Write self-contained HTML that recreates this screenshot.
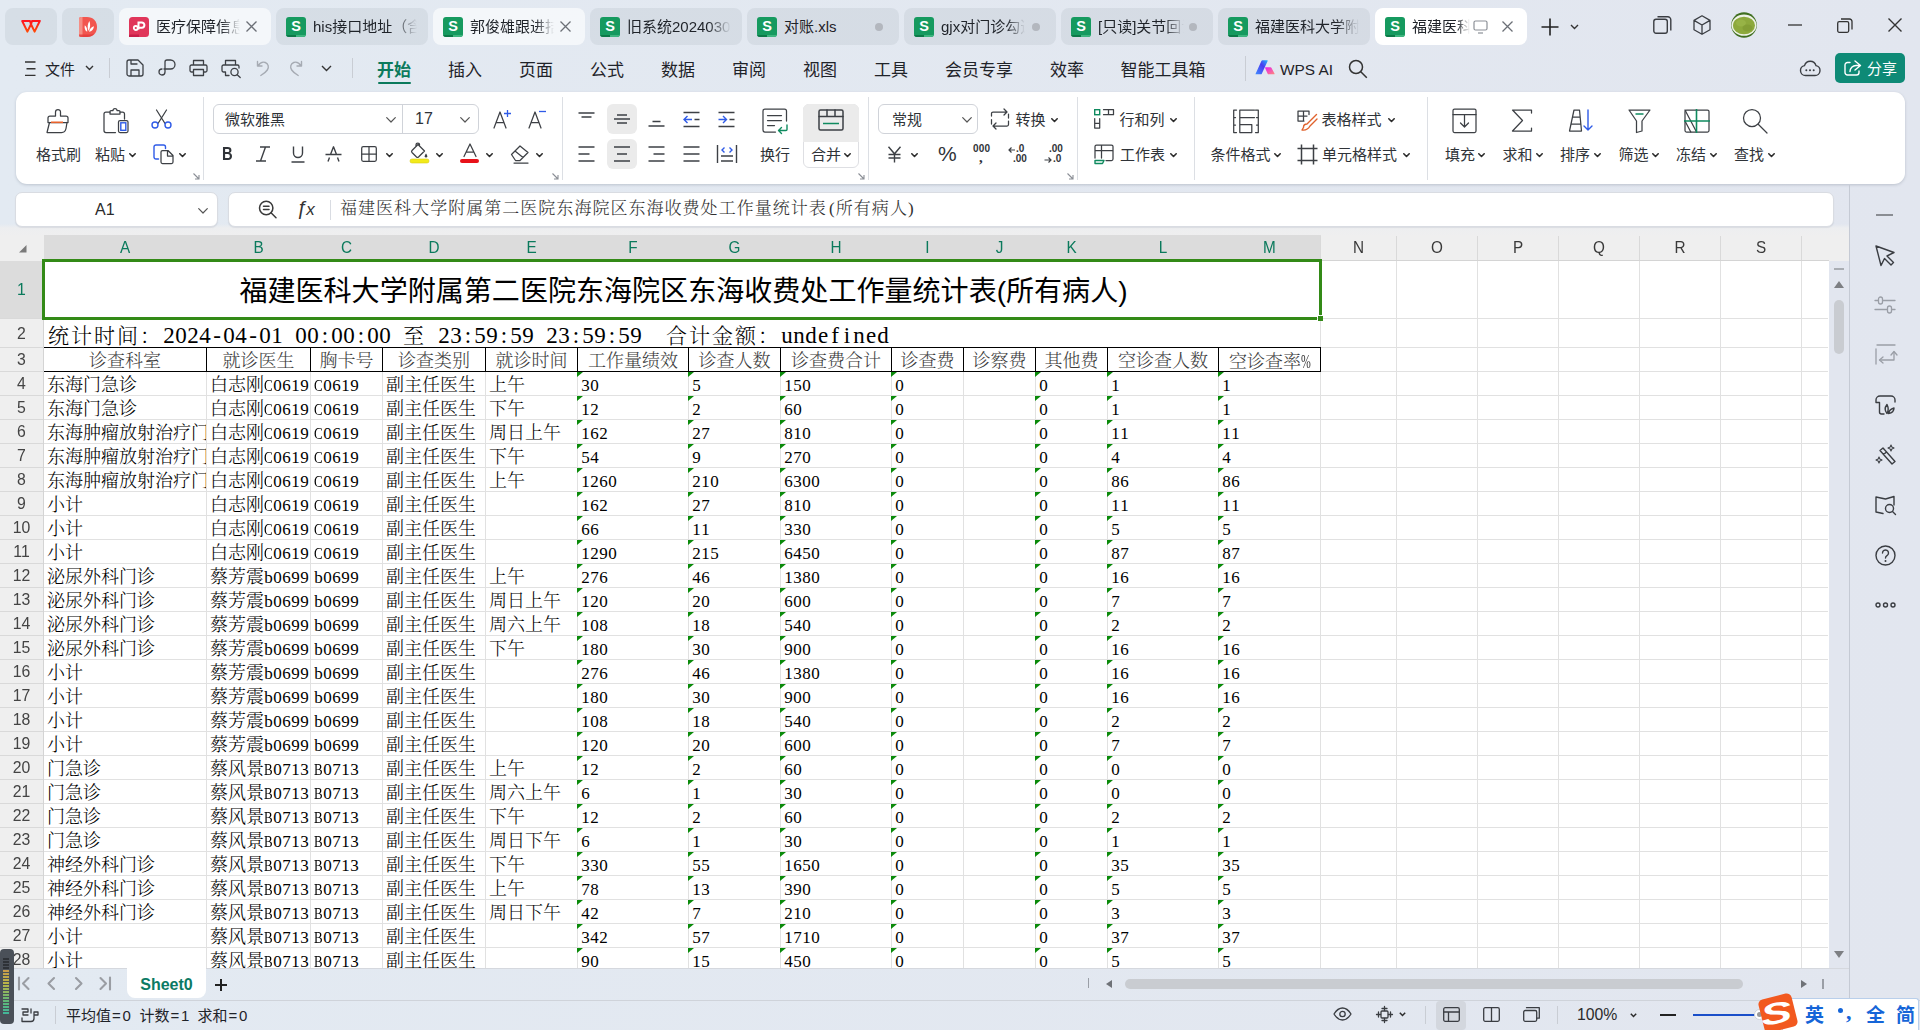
<!DOCTYPE html>
<html lang="zh-CN"><head><meta charset="utf-8"><title>WPS</title><style>
*{box-sizing:border-box;margin:0;padding:0}
html,body{width:1920px;height:1030px;overflow:hidden}
body{position:relative;background:linear-gradient(90deg,#e3eaf2,#e2e6ef);font-family:"Liberation Sans","Noto Sans CJK SC",sans-serif;color:#1f2329;font-size:15px}
.a{position:absolute}
svg{position:absolute;overflow:visible}
.ui{font-family:"Liberation Sans","Noto Sans CJK SC",sans-serif;margin-top:.09em}
/* title tabs */
.tab{position:absolute;top:8px;height:37px;width:152px;border-radius:8px;background:rgba(20,40,50,.058)}
.tab.h{background:rgba(255,255,255,.62)}
.tab.on{background:#fff}
.tab .t{position:absolute;left:37px;top:-1px;line-height:37px;font-size:15px;white-space:nowrap;overflow:hidden;color:#1f2329}
.sic{position:absolute;left:10px;top:9px;width:20px;height:20px;border-radius:3px;background:#169a5f;color:#fff;font:bold 14.500px/19px "Liberation Sans",sans-serif;text-align:center;overflow:hidden}
.sic:after{content:"";position:absolute;left:0;bottom:0;width:20px;height:2px;background:linear-gradient(90deg,#0c7a48 50%,#3fb57f 50%)}
.dot{position:absolute;left:128px;top:15px;width:8px;height:8px;border-radius:4px;background:#b3b7be}
/* menu */
.mi{position:absolute;top:52px;height:34px;line-height:34px;font-size:17px;color:#1f2329;white-space:nowrap;transform:translateX(-50%)}
/* ribbon */
#rb{position:absolute;left:16px;top:92px;width:1889px;height:92px;background:#fff;border-radius:11px;box-shadow:0 1px 3px rgba(90,100,120,.28)}
.sep{position:absolute;top:97px;width:1px;height:83px;background:#dcdfe4}
.rt{position:absolute;font-size:14px;line-height:20px;white-space:nowrap;color:#2f3338}
.cv{display:inline-block;width:5px;height:5px;border-right:1.6px solid #333;border-bottom:1.6px solid #333;transform:rotate(45deg);margin-left:5px;position:relative;top:-3px}
.bx{position:absolute;border:1px solid #d0d3d9;border-radius:6px;background:#fff}
/* sheet */
.ch{position:absolute;top:236px;height:24px;line-height:24px;text-align:center;font-size:17px;color:#3a3a3a;transform:scaleX(.9)}
.ch.s{color:#0b7a5c}
.rh{position:absolute;left:0;width:43px;text-align:center;font-size:17px;color:#444;transform:scaleX(.93)}
.vl{position:absolute;top:261px;width:1px;height:707px;background:#e1e1e1}
.hl{position:absolute;left:44px;height:1px;width:1784px;background:#e1e1e1}
.c{position:absolute;height:23px;line-height:23px;font-family:"Liberation Serif","Noto Serif CJK SC",serif;font-size:18px;font-weight:300;color:#000;white-space:nowrap;overflow:hidden}
.c i{font-style:normal;display:inline-block;width:9px;text-align:center;letter-spacing:0;font-size:17px}
.c i.w{text-align:left;transform:scaleX(.76);transform-origin:0 50%}
.c i.p{transform:scaleX(.62);font-size:19px}
.r2{font-size:21px;letter-spacing:2px}
.r2 i{width:12px;font-size:23px}
.hd{color:#3c3c3c;text-align:center}
.g{position:absolute;width:0;height:0;border-top:5.500px solid #0a8a0a;border-right:6px solid transparent}
</style></head><body>
<div class="tab" style="left:5px;width:52px"><svg style="left:15px;top:12px" width="22" height="14" viewBox="0 0 22 14"><defs><linearGradient id="wg" x1="0" y1="0" x2="0" y2="1"><stop offset="0" stop-color="#ff1520"/><stop offset="1" stop-color="#ff4a08"/></linearGradient></defs><path d="M10 1H2.200L7.400 11.600 11 4.200l3.600 7.400L19.800 1H12M10 1l1 3.200L12 1" fill="none" stroke="url(#wg)" stroke-width="2" stroke-linejoin="round" stroke-linecap="round"/></svg></div>
<div class="tab" style="left:62px;width:52px"><svg style="left:17px;top:9px" width="18" height="20" viewBox="0 0 18 20"><path d="M0 2a2 2 0 0 1 2-2h6c6 0 10 4 10 10s-4 10-10 10H2a2 2 0 0 1-2-2z" fill="#f2564f"/><path d="M0 2a2 2 0 0 1 2-2h1.5v20H2a2 2 0 0 1-2-2z" fill="#f58f86"/><path d="M9.600 14c-1.600-3.500-1-7 .8-10 1.200 3.200 1 7-.8 10zM8.200 14.800c-2.300-1.300-3-3.800-2.400-6.600 1.800 1.500 2.700 3.700 2.400 6.600zM10 14.800c.6-3 2.300-4.800 5-5.600-.3 3-2 5-5 5.600z" fill="#fff"/><path d="M0 17.500h10.500c2 0 3.500-.3 5-1.200-1.500 2.200-4 3.700-7.500 3.700H2a2 2 0 0 1-2-2z" fill="#e23b3b" opacity=".8"/></svg></div>
<div class="tab h" style="left:119px"><svg style="left:10px;top:9px" width="20" height="20" viewBox="0 0 20 20"><rect width="20" height="20" rx="3.5" fill="#e0365a"/><rect x="0" y="17.5" width="10" height="2.5" fill="#c81e48"/><path d="M9.5 12.5V5.5h3.3a2.6 2.6 0 0 1 0 5.2H9.2" fill="none" stroke="#fff" stroke-width="2"/><circle cx="6.8" cy="11" r="2" fill="none" stroke="#fff" stroke-width="1.8"/></svg><div class="t ui" style="width:84px;-webkit-mask-image:linear-gradient(to right,#000 78%,transparent);mask-image:linear-gradient(to right,#000 78%,transparent)">医疗保障信息</div><svg style="left:126px;top:12px" width="13" height="13" viewBox="0 0 13 13"><path d="M1.5 1.5l10 10M11.5 1.5l-10 10" stroke="#6b6f76" stroke-width="1.3" fill="none"/></svg></div>
<div class="tab " style="left:276px"><div class="sic">S</div><div class="t ui" style="width:104px;-webkit-mask-image:linear-gradient(to right,#000 78%,transparent);mask-image:linear-gradient(to right,#000 78%,transparent)">his接口地址（含</div></div>
<div class="tab h" style="left:433px"><div class="sic">S</div><div class="t ui" style="width:84px;-webkit-mask-image:linear-gradient(to right,#000 78%,transparent);mask-image:linear-gradient(to right,#000 78%,transparent)">郭俊雄跟进拮</div><svg style="left:126px;top:12px" width="13" height="13" viewBox="0 0 13 13"><path d="M1.5 1.5l10 10M11.5 1.5l-10 10" stroke="#6b6f76" stroke-width="1.3" fill="none"/></svg></div>
<div class="tab " style="left:590px"><div class="sic">S</div><div class="t ui" style="width:104px;-webkit-mask-image:linear-gradient(to right,#000 78%,transparent);mask-image:linear-gradient(to right,#000 78%,transparent)">旧系统20240308</div></div>
<div class="tab " style="left:747px"><div class="sic">S</div><div class="t ui" >对账.xls</div><div class="dot"></div></div>
<div class="tab " style="left:904px"><div class="sic">S</div><div class="t ui" style="width:84px;-webkit-mask-image:linear-gradient(to right,#000 78%,transparent);mask-image:linear-gradient(to right,#000 78%,transparent)">gjx对门诊勾选</div><div class="dot"></div></div>
<div class="tab " style="left:1061px"><div class="sic">S</div><div class="t ui" style="width:86px;-webkit-mask-image:linear-gradient(to right,#000 78%,transparent);mask-image:linear-gradient(to right,#000 78%,transparent)">[只读]关节回访</div><div class="dot"></div></div>
<div class="tab " style="left:1218px"><div class="sic">S</div><div class="t ui" style="width:104px;-webkit-mask-image:linear-gradient(to right,#000 78%,transparent);mask-image:linear-gradient(to right,#000 78%,transparent)">福建医科大学附属</div></div>
<div class="tab on" style="left:1375px"><div class="sic">S</div><div class="t ui" style="width:58px;-webkit-mask-image:linear-gradient(to right,#000 78%,transparent);mask-image:linear-gradient(to right,#000 78%,transparent)">福建医科大</div><svg style="left:98px;top:12px" width="15" height="14" viewBox="0 0 15 14"><rect x="1" y="1" width="13" height="9" rx="1.5" fill="none" stroke="#8c9097" stroke-width="1.2"/><path d="M5 13h5" stroke="#8c9097" stroke-width="1.2"/></svg><svg style="left:126px;top:12px" width="13" height="13" viewBox="0 0 13 13"><path d="M1.5 1.5l10 10M11.5 1.5l-10 10" stroke="#6b6f76" stroke-width="1.3" fill="none"/></svg></div>
<svg style="left:1541px;top:18px" width="18" height="18" viewBox="0 0 18 18"><path d="M9 0.5v17M0.5 9h17" stroke="#222" stroke-width="1.6" fill="none"/></svg>
<svg style="left:1570px;top:24px" width="9" height="6" viewBox="0 0 9 6"><path d="M1 1l3.5 3.5L8 1" stroke="#333" stroke-width="1.4" fill="none"/></svg>
<svg style="left:1653px;top:16px" width="19" height="18" viewBox="0 0 19 18"><rect x="0.8" y="3.2" width="13.5" height="14" rx="2.2" fill="none" stroke="#3a3d42" stroke-width="1.4"/><path d="M4.5 0.8h10.3a3 3 0 0 1 3 3v10.6" fill="none" stroke="#3a3d42" stroke-width="1.4"/></svg>
<svg style="left:1693px;top:15px" width="18" height="20" viewBox="0 0 18 20"><path d="M9 0.800l8 4.600v9.300L9 19.300 1 14.700V5.400zM1 5.400L9 10l8-4.600M9 10v9.300" fill="none" stroke="#3a3d42" stroke-width="1.3" stroke-linejoin="round"/></svg>
<svg style="left:1731px;top:12px" width="26" height="26" viewBox="0 0 26 26"><circle cx="13" cy="13" r="12.800" fill="#3f6e1f"/><ellipse cx="13" cy="13.200" rx="12.500" ry="10.600" fill="#eef2e6"/><ellipse cx="13" cy="13.500" rx="11" ry="8.800" fill="#8da93c"/><ellipse cx="10" cy="11" rx="5" ry="3.500" fill="#9ab548" opacity=".8"/><ellipse cx="16.500" cy="16" rx="5" ry="3.500" fill="#7f9a32" opacity=".7"/></svg>
<svg style="left:1788px;top:24px" width="14" height="2" viewBox="0 0 14 2"><path d="M0 1h14" stroke="#333" stroke-width="1.3"/></svg>
<svg style="left:1837px;top:18px" width="16" height="15" viewBox="0 0 16 15"><rect x="0.7" y="3.7" width="11" height="10.600" rx="1.5" fill="none" stroke="#333" stroke-width="1.3"/><path d="M4 1h8.5a2.500 2.500 0 0 1 2.500 2.500v8" fill="none" stroke="#333" stroke-width="1.3"/></svg>
<svg style="left:1888px;top:18px" width="14" height="14" viewBox="0 0 14 14"><path d="M0.5 0.5l13 13M13.500 0.5l-13 13" stroke="#333" stroke-width="1.4" fill="none"/></svg>
<svg style="left:24.500px;top:60.500px" width="11" height="15" viewBox="0 0 11 15"><path d="M0 1h10.500M1.500 7.700h9M0 14.400h10.500" stroke="#333" stroke-width="1.4"/></svg>
<div class="a ui" style="left:45px;top:52px;line-height:34px;font-size:15px">文件</div>
<svg style="left:85px;top:65px" width="9" height="6" viewBox="0 0 9 6"><path d="M1 1l3.5 3.5L8 1" stroke="#333" stroke-width="1.4" fill="none"/></svg>
<div class="a" style="left:109px;top:58px;width:1px;height:20px;background:#c9cdd4"></div>
<svg style="left:126px;top:59px" width="18" height="18" viewBox="0 0 18 18"><path d="M1 3a2 2 0 0 1 2-2h9l5 5v9a2 2 0 0 1-2 2H3a2 2 0 0 1-2-2zM5 17v-6h8v6M5 1v4h6" fill="none" stroke="#3d4045" stroke-width="1.300" stroke-linejoin="round" stroke-linecap="round"/></svg>
<svg style="left:158px;top:59px" width="18" height="18" viewBox="0 0 18 18"><path d="M7 13V3a2 2 0 0 1 2-2h3.500a4.500 4.500 0 0 1 0 9H6M7 13a3 3 0 1 1-3-3" fill="none" stroke="#3d4045" stroke-width="1.300" stroke-linejoin="round" stroke-linecap="round"/></svg>
<svg style="left:189px;top:59px" width="19" height="18" viewBox="0 0 19 18"><path d="M4.500 6V1.500h10V6M4.500 13H2.500a1.500 1.500 0 0 1-1.500-1.500V7.500A1.500 1.500 0 0 1 2.500 6h14A1.500 1.500 0 0 1 18 7.500v4A1.500 1.500 0 0 1 16.500 13h-2M4.500 10.500h10v6h-10z" fill="none" stroke="#3d4045" stroke-width="1.300" stroke-linejoin="round" stroke-linecap="round"/></svg>
<svg style="left:221px;top:59px" width="21" height="19" viewBox="0 0 21 19"><path d="M4.500 6V1.500h10V6M4.500 13H2.500a1.500 1.500 0 0 1-1.500-1.500V7.500A1.500 1.500 0 0 1 2.500 6h14A1.500 1.500 0 0 1 18 7.500V9M4.500 13v3.500H8" fill="none" stroke="#3d4045" stroke-width="1.300" stroke-linejoin="round" stroke-linecap="round"/><circle cx="13.5" cy="13" r="3.600" fill="none" stroke="#3d4045" stroke-width="1.300" stroke-linejoin="round" stroke-linecap="round"/><path d="M16.200 15.800l3 2.700" fill="none" stroke="#3d4045" stroke-width="1.300" stroke-linejoin="round" stroke-linecap="round"/></svg>
<svg style="left:256px;top:60px" width="15" height="17" viewBox="0 0 15 17"><path d="M1.500 1.500v4.500h4.500M1.800 6c2-3 5-4.500 7.500-3.500 3 1.200 4 4.500 2 7.500-1.500 2.300-4 4-6.500 5.500" fill="none" stroke="#a6abb3" stroke-width="1.4" stroke-linecap="round" stroke-linejoin="round"/></svg>
<svg style="left:288px;top:60px" width="15" height="17" viewBox="0 0 15 17"><path d="M13.500 1.500v4.500h-4.500M13.200 6c-2-3-5-4.500-7.500-3.500-3 1.200-4 4.500-2 7.500 1.500 2.300 4 4 6.500 5.500" fill="none" stroke="#a6abb3" stroke-width="1.4" stroke-linecap="round" stroke-linejoin="round"/></svg>
<svg style="left:321px;top:65px" width="11" height="7" viewBox="0 0 11 7"><path d="M1 1l4.500 4.500L10 1" stroke="#333" stroke-width="1.4" fill="none"/></svg>
<div class="a" style="left:352px;top:58px;width:1px;height:20px;background:#c9cdd4"></div>
<div class="mi ui" style="left:394px;font-weight:700;color:#0b7a5c">开始</div>
<div class="a" style="left:378px;top:82px;width:33px;height:2px;border-radius:1px;background:#0b7a5c"></div>
<div class="mi ui" style="left:465px">插入</div>
<div class="mi ui" style="left:536px">页面</div>
<div class="mi ui" style="left:607px">公式</div>
<div class="mi ui" style="left:678px">数据</div>
<div class="mi ui" style="left:749px">审阅</div>
<div class="mi ui" style="left:820px">视图</div>
<div class="mi ui" style="left:891px">工具</div>
<div class="mi ui" style="left:979px">会员专享</div>
<div class="mi ui" style="left:1067px">效率</div>
<div class="mi ui" style="left:1163px">智能工具箱</div>
<div class="a" style="left:1245px;top:56px;width:1px;height:25px;background:#c9cdd4"></div>
<svg style="left:1255px;top:60px" width="20" height="15" viewBox="0 0 20 15"><defs><linearGradient id="ai" x1="0" y1="0" x2="1" y2="1"><stop offset="0" stop-color="#3b6cf6"/><stop offset=".55" stop-color="#7a4cf0"/><stop offset="1" stop-color="#f0569a"/></linearGradient></defs><linearGradient id="ai2" x1="0" y1="1" x2="1" y2="0"><stop offset="0" stop-color="#3f8cff"/><stop offset=".6" stop-color="#4a3cf0"/><stop offset="1" stop-color="#22b8ff"/></linearGradient><linearGradient id="ai3" x1="0" y1="0" x2="1" y2="1"><stop offset="0" stop-color="#e81cf0"/><stop offset="1" stop-color="#ff8a7a"/></linearGradient><path d="M0.500 14L6.500 0.800a1 1 0 0 1 .9-.6h4.800a.5.5 0 0 1 .45.700L6.800 13.700a1 1 0 0 1-.9.600H.9a.45.45 0 0 1-.4-.600z" fill="url(#ai2)"/><path d="M10.200 7.200h5.300a1 1 0 0 1 .9.550L19.500 13.600a.5.500 0 0 1-.45.700h-5.500a1 1 0 0 1-.9-.55L10.200 8.200z" fill="url(#ai3)"/></svg>
<div class="a ui" style="left:1280px;top:52px;line-height:34px;font-size:15.400px">WPS AI</div>
<svg style="left:1348px;top:59px" width="20" height="20" viewBox="0 0 20 20"><circle cx="8" cy="8" r="6.500" fill="none" stroke="#333" stroke-width="1.5"/><path d="M12.800 12.800l6 6" stroke="#333" stroke-width="1.5"/></svg>
<svg style="left:1799px;top:59px" width="22" height="18" viewBox="0 0 22 18"><path d="M6.500 16.500a5 5 0 0 1-1-9.900 6 6 0 0 1 11.500 0 5 5 0 0 1-1 9.900z" fill="none" stroke="#3a3d42" stroke-width="1.400"/><circle cx="7.300" cy="11.200" r="1" fill="#3a3d42"/><circle cx="11" cy="11.200" r="1" fill="#3a3d42"/><circle cx="14.700" cy="11.200" r="1" fill="#3a3d42"/></svg>
<div class="a" style="left:1835px;top:53px;width:70px;height:30px;border-radius:5px;background:#0e8a76"></div>
<svg style="left:1844px;top:60px" width="18" height="16" viewBox="0 0 18 16"><path d="M6 2.500H3.500A2.500 2.500 0 0 0 1 5v7.500A2.500 2.500 0 0 0 3.500 15h9a2.500 2.500 0 0 0 2.500-2.500V11M11 1l5.500 4.500L11 10M16 5.500h-4a6 6 0 0 0-6 6" fill="none" stroke="#fff" stroke-width="1.400" stroke-linecap="round" stroke-linejoin="round"/></svg>
<div class="a ui" style="left:1867px;top:53px;line-height:30px;font-size:15px;color:#fff">分享</div>
<div id="rb"></div>
<div class="sep" style="left:203px"></div>
<div class="sep" style="left:562px"></div>
<div class="sep" style="left:868px"></div>
<div class="sep" style="left:1077px"></div>
<div class="sep" style="left:1194px"></div>
<div class="sep" style="left:1427px"></div>
<svg style="left:45px;top:108px" width="26" height="26" viewBox="0 0 26 26"><path d="M10.500 8V4a2.500 2.500 0 0 1 5 0v4h5.500a2 2 0 0 1 2 2v4.500H3V10a2 2 0 0 1 2-2z" fill="none" stroke="#3d4045" stroke-width="1.25" stroke-linecap="round" stroke-linejoin="round"/><path d="M4.500 14.500L2 24.500h14.500c2.500 0 4-1.500 4.500-4l1-6" fill="none" stroke="#3d4045" stroke-width="1.25" stroke-linecap="round" stroke-linejoin="round"/><path d="M6 14.300h12" stroke="#e8622c" stroke-width="1.600" fill="none"/></svg>
<div class="rt ui" style="left:36px;top:143.5px;font-size:15px">格式刷</div>
<svg style="left:103px;top:108px" width="27" height="26" viewBox="0 0 27 26"><path d="M7 4H3a2 2 0 0 0-2 2v16.500a2 2 0 0 0 2 2h9.500M17 4h2.500a2 2 0 0 1 2 2v5" fill="none" stroke="#3d4045" stroke-width="1.25" stroke-linecap="round" stroke-linejoin="round"/><path d="M7 6V3.500a1 1 0 0 1 1-1h2a2 2 0 0 1 4 0h2a1 1 0 0 1 1 1V6z" fill="none" stroke="#3d4045" stroke-width="1.25" stroke-linecap="round" stroke-linejoin="round"/><rect x="15.500" y="12.500" width="9.500" height="12" rx="1.500" fill="none" stroke="#3d4045" stroke-width="1.25" stroke-linecap="round" stroke-linejoin="round"/><rect x="17.800" y="14.800" width="5" height="7.500" fill="none" stroke="#2f5be7" stroke-width="1.400"/></svg>
<div class="rt ui" style="left:95px;top:143.5px;font-size:15px">粘贴</div>
<svg style="left:128.5px;top:152.5px" width="7" height="5" viewBox="0 0 7 5"><path d="M0.8 0.8L3.5 3.500 6.200 0.8" fill="none" stroke="#2b2b2b" stroke-width="1.600" stroke-linecap="round" stroke-linejoin="round"/></svg>
<svg style="left:151px;top:109px" width="21" height="20" viewBox="0 0 21 20"><path d="M5.500 1l8.500 13.500M15.500 1L7 14.500" fill="none" stroke="#3d4045" stroke-width="1.25" stroke-linecap="round" stroke-linejoin="round"/><circle cx="4" cy="16" r="3" fill="none" stroke="#2f5be7" stroke-width="1.400"/><circle cx="17" cy="16" r="3" fill="none" stroke="#2f5be7" stroke-width="1.400"/></svg>
<svg style="left:153px;top:144px" width="21" height="20" viewBox="0 0 21 20"><path d="M5.500 15H3a2 2 0 0 1-2-2V3a2 2 0 0 1 2-2h7.500a2 2 0 0 1 2 2v1.500" fill="none" stroke="#2f5be7" stroke-width="1.400" stroke-linecap="round"/><path d="M8 8a1.500 1.500 0 0 1 1.500-1.500H15l5 5V18a1.500 1.500 0 0 1-1.500 1.500h-9A1.500 1.500 0 0 1 8 18zM14.500 6.500V12H20" fill="none" stroke="#3d4045" stroke-width="1.25" stroke-linecap="round" stroke-linejoin="round"/></svg>
<svg style="left:178.5px;top:152.5px" width="7" height="5" viewBox="0 0 7 5"><path d="M0.8 0.8L3.5 3.500 6.200 0.8" fill="none" stroke="#2b2b2b" stroke-width="1.600" stroke-linecap="round" stroke-linejoin="round"/></svg>
<svg style="left:192.5px;top:173.0px" width="7" height="7" viewBox="0 0 7 7"><path d="M0.5 0.5L6 6M6 2v4H2" fill="none" stroke="#8a8e95" stroke-width="1.100"/></svg>
<div class="bx" style="left:213px;top:104px;width:266px;height:30px"></div>
<div class="a" style="left:402px;top:105px;width:1px;height:28px;background:#d0d3d9"></div>
<div class="rt ui" style="left:225px;top:109px;font-size:15px">微软雅黑</div>
<svg style="left:385.5px;top:116.5px" width="10" height="6" viewBox="0 0 10 6"><path d="M0.7 0.7L5 5 9.300 0.7" fill="none" stroke="#555" stroke-width="1.200" stroke-linecap="round" stroke-linejoin="round"/></svg>
<div class="rt" style="left:415px;top:109px;font-size:16px;font-family:'Liberation Sans',sans-serif">17</div>
<svg style="left:459.5px;top:116.5px" width="10" height="6" viewBox="0 0 10 6"><path d="M0.7 0.7L5 5 9.300 0.7" fill="none" stroke="#555" stroke-width="1.200" stroke-linecap="round" stroke-linejoin="round"/></svg>
<svg style="left:493px;top:109px" width="19" height="20" viewBox="0 0 19 20"><path d="M1 19L7 3l6 16M3.300 13.500h7.400" fill="none" stroke="#3d4045" stroke-width="1.25" stroke-linecap="round" stroke-linejoin="round"/><path d="M14.500 1v7M11 4.500h7" fill="none" stroke="#2f5be7" stroke-width="1.300"/></svg>
<svg style="left:528px;top:109px" width="19" height="20" viewBox="0 0 19 20"><path d="M1 19L7 3l6 16M3.300 13.500h7.400" fill="none" stroke="#3d4045" stroke-width="1.25" stroke-linecap="round" stroke-linejoin="round"/><path d="M11 2.500h7" fill="none" stroke="#2f5be7" stroke-width="1.300"/></svg>
<div class="rt" style="left:222px;top:143px;font:bold 18px/22px 'Liberation Sans',sans-serif;transform:scaleX(.82);transform-origin:0 50%">B</div>
<svg style="left:255px;top:146px" width="16" height="16" viewBox="0 0 16 16"><path d="M5 1h10M1 15h10M10.500 1L5.500 15" fill="none" stroke="#3d4045" stroke-width="1.400"/></svg>
<svg style="left:291px;top:146px" width="14" height="17" viewBox="0 0 14 17"><path d="M2.500 0.5v6.500a4.500 4.500 0 0 0 9 0V0.500M0.500 16h13" fill="none" stroke="#3d4045" stroke-width="1.400"/></svg>
<svg style="left:325px;top:146px" width="17" height="16" viewBox="0 0 17 16"><path d="M3 15.500l1.500-4M14 15.500l-1.500-4M5.500 8.500L8.500 0.800l3 7.700M0.500 8.500h16" fill="none" stroke="#3d4045" stroke-width="1.400" stroke-linejoin="round"/></svg>
<svg style="left:361px;top:146px" width="16" height="16" viewBox="0 0 16 16"><rect x="0.700" y="0.700" width="14.600" height="14.600" rx="1.500" fill="none" stroke="#3d4045" stroke-width="1.25" stroke-linecap="round" stroke-linejoin="round"/><path d="M8 0.700v14.600M0.700 8h14.600" fill="none" stroke="#3d4045" stroke-width="1.25" stroke-linecap="round" stroke-linejoin="round"/></svg>
<svg style="left:385.5px;top:152.5px" width="7" height="5" viewBox="0 0 7 5"><path d="M0.8 0.8L3.5 3.500 6.200 0.8" fill="none" stroke="#2b2b2b" stroke-width="1.600" stroke-linecap="round" stroke-linejoin="round"/></svg>
<svg style="left:410px;top:143px" width="20" height="21" viewBox="0 0 20 21"><path d="M6 3.500L3.500 6 2 7.500a1.500 1.500 0 0 0 0 2l4.500 4.500a1.500 1.500 0 0 0 2 0l6-6L8 1.500 6 3.500 M6 3.500V1.800a1.800 1.800 0 0 1 3.600 0" fill="none" stroke="#3d4045" stroke-width="1.25" stroke-linecap="round" stroke-linejoin="round"/><path d="M16 10.500c.8 1.200 1.300 2 1.300 2.700a1.300 1.300 0 0 1-2.600 0c0-.7.500-1.500 1.300-2.700z" fill="#3d4045"/><rect x="0" y="16" width="19" height="4" rx="2" fill="#f2ea1a" stroke="#d8cf10" stroke-width=".6"/></svg>
<svg style="left:435.5px;top:152.5px" width="7" height="5" viewBox="0 0 7 5"><path d="M0.8 0.8L3.5 3.500 6.200 0.8" fill="none" stroke="#2b2b2b" stroke-width="1.600" stroke-linecap="round" stroke-linejoin="round"/></svg>
<svg style="left:460px;top:143px" width="20" height="21" viewBox="0 0 20 21"><path d="M4 13.500L10 1l6 12.500M6.300 9h7.400" fill="none" stroke="#3d4045" stroke-width="1.25" stroke-linecap="round" stroke-linejoin="round"/><rect x="0" y="16" width="19" height="4" rx="2" fill="#e8121a"/></svg>
<svg style="left:485.5px;top:152.5px" width="7" height="5" viewBox="0 0 7 5"><path d="M0.8 0.8L3.5 3.500 6.200 0.8" fill="none" stroke="#2b2b2b" stroke-width="1.600" stroke-linecap="round" stroke-linejoin="round"/></svg>
<svg style="left:510px;top:145px" width="21" height="19" viewBox="0 0 21 19"><path d="M1.500 9.500L10 1l8 6.500-8 8H5.500z M5 6l8 6.500" fill="none" stroke="#3d4045" stroke-width="1.25" stroke-linecap="round" stroke-linejoin="round"/><path d="M4 18h14" fill="none" stroke="#3d4045" stroke-width="1.25" stroke-linecap="round" stroke-linejoin="round"/></svg>
<svg style="left:535.5px;top:152.5px" width="7" height="5" viewBox="0 0 7 5"><path d="M0.8 0.8L3.5 3.500 6.200 0.8" fill="none" stroke="#2b2b2b" stroke-width="1.600" stroke-linecap="round" stroke-linejoin="round"/></svg>
<svg style="left:551.5px;top:173.0px" width="7" height="7" viewBox="0 0 7 7"><path d="M0.5 0.5L6 6M6 2v4H2" fill="none" stroke="#8a8e95" stroke-width="1.100"/></svg>
<div class="a" style="left:607px;top:104px;width:30px;height:30px;border-radius:6px;background:#ebebeb"></div>
<div class="a" style="left:607px;top:139px;width:30px;height:30px;border-radius:6px;background:#ebebeb"></div>
<svg style="left:0px;top:0px" width="1" height="1" viewBox="0 0 1 1"><path d="M578.5 113H594.5M581.5 117H591.5" fill="none" stroke="#3d4045" stroke-width="1.300"/></svg>
<svg style="left:0px;top:0px" width="1" height="1" viewBox="0 0 1 1"><path d="M617 115H627M614 119H630M617 123H627" fill="none" stroke="#3d4045" stroke-width="1.300"/></svg>
<svg style="left:0px;top:0px" width="1" height="1" viewBox="0 0 1 1"><path d="M652.5 121.5H660.5M648.5 126H664.5" fill="none" stroke="#3d4045" stroke-width="1.300"/></svg>
<svg style="left:0px;top:0px" width="1" height="1" viewBox="0 0 1 1"><path d="M683.5 112.5H699.5M694.5 119.5H699.5M683.5 126.5H699.5" fill="none" stroke="#3d4045" stroke-width="1.300"/><path d="M684 119.500h8M687.500 116l-3.500 3.500 3.500 3.500" fill="none" stroke="#2f5be7" stroke-width="1.400"/></svg>
<svg style="left:0px;top:0px" width="1" height="1" viewBox="0 0 1 1"><path d="M718.5 112.5H734.5M729.5 119.5H734.5M718.5 126.5H734.5" fill="none" stroke="#3d4045" stroke-width="1.300"/><path d="M718.500 119.500h8M723 116l3.500 3.500-3.500 3.500" fill="none" stroke="#2f5be7" stroke-width="1.400"/></svg>
<svg style="left:0px;top:0px" width="1" height="1" viewBox="0 0 1 1"><path d="M578.5 147H594.5M578.5 154H589.5M578.5 161H594.5" fill="none" stroke="#3d4045" stroke-width="1.300"/></svg>
<svg style="left:0px;top:0px" width="1" height="1" viewBox="0 0 1 1"><path d="M614 147H630M617 154H627M614 161H630" fill="none" stroke="#3d4045" stroke-width="1.300"/></svg>
<svg style="left:0px;top:0px" width="1" height="1" viewBox="0 0 1 1"><path d="M648.5 147H664.5M653.5 154H664.5M648.5 161H664.5" fill="none" stroke="#3d4045" stroke-width="1.300"/></svg>
<svg style="left:0px;top:0px" width="1" height="1" viewBox="0 0 1 1"><path d="M683.5 147H699.5M683.5 154H699.5M683.5 161H699.5" fill="none" stroke="#3d4045" stroke-width="1.300"/></svg>
<svg style="left:0px;top:0px" width="1" height="1" viewBox="0 0 1 1"><path d="M717.500 145v18M736.500 145v18M721 156h12M721 161h12" fill="none" stroke="#3d4045" stroke-width="1.400"/><path d="M724.500 147.500l-2.500 2.500 2.500 2.500M729.500 147.500l2.500 2.500-2.500 2.500" fill="none" stroke="#2f5be7" stroke-width="1.400"/></svg>
<svg style="left:762px;top:108px" width="27" height="27" viewBox="0 0 27 27"><path d="M24.500 13V3a2 2 0 0 0-2-2H3a2 2 0 0 0-2 2v19a2 2 0 0 0 2 2h10.500M5.500 7.500h14M5.500 12.500h14M5.500 17.500h7" fill="none" stroke="#3d4045" stroke-width="1.25" stroke-linecap="round" stroke-linejoin="round"/><path d="M25 17v4.500a1 1 0 0 1-1 1h-7M19.500 19.500l-3 3 3 3" fill="none" stroke="#0f8a5f" stroke-width="1.400" stroke-linecap="round" stroke-linejoin="round"/></svg>
<div class="rt ui" style="left:760px;top:143.5px;font-size:15px">换行</div>
<div class="a" style="left:803px;top:104px;width:56px;height:64px;border-radius:6px;border:1px solid #dedfe3;background:#fff"></div>
<div class="a" style="left:803px;top:104px;width:56px;height:38px;border-radius:6px 6px 0 0;background:#ebebeb"></div>
<svg style="left:818px;top:109px" width="26" height="22" viewBox="0 0 26 22"><rect x="1" y="1" width="24" height="20" rx="1.500" fill="none" stroke="#3d4045" stroke-width="1.5" stroke-linecap="round" stroke-linejoin="round"/><path d="M1 7.500h24M9 1v6.500M17 1v6.500" fill="none" stroke="#3d4045" stroke-width="1.5" stroke-linecap="round" stroke-linejoin="round"/><path d="M5 14.500h16" stroke="#0f8a5f" stroke-width="1.500" fill="none"/></svg>
<div class="rt ui" style="left:811px;top:143.5px;font-size:15px">合并</div>
<svg style="left:844.0px;top:152.5px" width="7" height="5" viewBox="0 0 7 5"><path d="M0.8 0.8L3.5 3.500 6.200 0.8" fill="none" stroke="#2b2b2b" stroke-width="1.600" stroke-linecap="round" stroke-linejoin="round"/></svg>
<svg style="left:857.5px;top:173.0px" width="7" height="7" viewBox="0 0 7 7"><path d="M0.5 0.5L6 6M6 2v4H2" fill="none" stroke="#8a8e95" stroke-width="1.100"/></svg>
<div class="bx" style="left:878px;top:104px;width:100px;height:30px"></div>
<div class="rt ui" style="left:892px;top:109px;font-size:15px">常规</div>
<svg style="left:962px;top:116.5px" width="10" height="6" viewBox="0 0 10 6"><path d="M0.7 0.7L5 5 9.300 0.7" fill="none" stroke="#555" stroke-width="1.200" stroke-linecap="round" stroke-linejoin="round"/></svg>
<svg style="left:990px;top:108px" width="20" height="22" viewBox="0 0 20 22"><path d="M1.500 8V5.500a1.500 1.500 0 0 1 1.500-1.500h13.500M14 1l3 3-3 3M18.500 13v3.500a1.500 1.500 0 0 1-1.500 1.500H3.500M6 15l-3 3 3 3M1.500 11.500V16M18.500 10V6" fill="none" stroke="#3d4045" stroke-width="1.25" stroke-linecap="round" stroke-linejoin="round"/></svg>
<div class="rt ui" style="left:1015.5px;top:109px;font-size:15px">转换</div>
<svg style="left:1050.5px;top:117.5px" width="7" height="5" viewBox="0 0 7 5"><path d="M0.8 0.8L3.5 3.500 6.200 0.8" fill="none" stroke="#2b2b2b" stroke-width="1.600" stroke-linecap="round" stroke-linejoin="round"/></svg>
<svg style="left:887px;top:146px" width="15" height="17" viewBox="0 0 15 17"><path d="M1.500 0.800l6 7 6-7M7.500 7.800V16.500M1.500 8.500h12M1.500 12h12" fill="none" stroke="#3d4045" stroke-width="1.400"/></svg>
<svg style="left:910.5px;top:152.5px" width="7" height="5" viewBox="0 0 7 5"><path d="M0.8 0.8L3.5 3.500 6.200 0.8" fill="none" stroke="#2b2b2b" stroke-width="1.600" stroke-linecap="round" stroke-linejoin="round"/></svg>
<div class="rt" style="left:938px;top:143px;font:21px/22px 'Liberation Sans',sans-serif">%</div>
<div class="rt" style="left:973px;top:143px;font:bold 10px/12px 'Liberation Sans',sans-serif;letter-spacing:.2px">000</div>
<div class="rt" style="left:979px;top:149px;font:bold 15px/16px 'Liberation Serif',serif">,</div>
<div class="rt" style="left:1016px;top:143px;font:bold 10px/12px 'Liberation Sans',sans-serif">.0</div>
<div class="rt" style="left:1013px;top:153px;font:bold 10px/12px 'Liberation Sans',sans-serif">.00</div>
<svg style="left:1008px;top:146.5px" width="8" height="6" viewBox="0 0 8 6"><path d="M7 3H1M3.500 0.500L1 3l2.500 2.500" fill="none" stroke="#3d4045" stroke-width="1.200"/></svg>
<div class="rt" style="left:1049px;top:143px;font:bold 10px/12px 'Liberation Sans',sans-serif">.00</div>
<div class="rt" style="left:1053px;top:153px;font:bold 10px/12px 'Liberation Sans',sans-serif">.0</div>
<svg style="left:1044px;top:156.5px" width="8" height="6" viewBox="0 0 8 6"><path d="M0.500 3h6M4.500 0.500L7 3 4.500 5.500" fill="none" stroke="#3d4045" stroke-width="1.200"/></svg>
<svg style="left:1066.5px;top:173.0px" width="7" height="7" viewBox="0 0 7 7"><path d="M0.5 0.5L6 6M6 2v4H2" fill="none" stroke="#8a8e95" stroke-width="1.100"/></svg>
<svg style="left:1094px;top:109px" width="21" height="20" viewBox="0 0 21 20"><rect x="0.700" y="0.700" width="5" height="5" fill="none" stroke="#0f8a5f" stroke-width="1.400"/><path d="M0.700 9.500v9.500h5v-9.500M0.700 14.300h5M9.500 0.700h10v5h-10M14.500 0.700v5" fill="none" stroke="#3d4045" stroke-width="1.25" stroke-linecap="round" stroke-linejoin="round"/></svg>
<div class="rt ui" style="left:1119.5px;top:109px;font-size:15px">行和列</div>
<svg style="left:1169.5px;top:117.5px" width="7" height="5" viewBox="0 0 7 5"><path d="M0.8 0.8L3.5 3.500 6.200 0.8" fill="none" stroke="#2b2b2b" stroke-width="1.600" stroke-linecap="round" stroke-linejoin="round"/></svg>
<svg style="left:1094px;top:144px" width="21" height="21" viewBox="0 0 21 21"><path d="M1 14V2.500a1.500 1.500 0 0 1 1.500-1.500h15a1.500 1.500 0 0 1 1.500 1.500V15a1.500 1.500 0 0 1-1.500 1.500H12M1 6.500h18M7.500 1v13" fill="none" stroke="#3d4045" stroke-width="1.25" stroke-linecap="round" stroke-linejoin="round"/><path d="M1 16.500h9l-1.500 3H1z" fill="none" stroke="#0f8a5f" stroke-width="1.400" stroke-linejoin="round"/></svg>
<div class="rt ui" style="left:1120px;top:143.5px;font-size:15px">工作表</div>
<svg style="left:1169.5px;top:152.5px" width="7" height="5" viewBox="0 0 7 5"><path d="M0.8 0.8L3.5 3.500 6.200 0.8" fill="none" stroke="#2b2b2b" stroke-width="1.600" stroke-linecap="round" stroke-linejoin="round"/></svg>
<svg style="left:1233px;top:108px" width="26" height="26" viewBox="0 0 26 26"><path d="M3.500 2H0.700v22.500h2.800M22.500 2h2.800v22.500h-2.800M0.700 9.500h1.800M0.700 17h1.800M23.500 9.500h1.800M23.500 17h1.800" fill="none" stroke="#3d4045" stroke-width="1.25" stroke-linecap="round" stroke-linejoin="round"/><path d="M21.500 2H6.800v22.500h12V16.500H6.800M6.800 9.500h14.700" fill="none" stroke="#3d4045" stroke-width="1.25" stroke-linecap="round" stroke-linejoin="round"/></svg>
<div class="rt ui" style="left:1210.5px;top:143.5px;font-size:15px">条件格式</div>
<svg style="left:1273.5px;top:152.5px" width="7" height="5" viewBox="0 0 7 5"><path d="M0.8 0.8L3.5 3.500 6.200 0.8" fill="none" stroke="#2b2b2b" stroke-width="1.600" stroke-linecap="round" stroke-linejoin="round"/></svg>
<svg style="left:1297px;top:109.5px" width="21" height="21" viewBox="0 0 21 21"><path d="M12 4.500V1H1v10h6M1 6h9M6.500 1v10" fill="none" stroke="#3d4045" stroke-width="1.25" stroke-linecap="round" stroke-linejoin="round"/><path d="M19.500 4.500L10 14M20 9l-7 7M10 14c-2 0-3.500 1.500-3.500 3.500L5 20c3 .5 6-.5 8-4" fill="none" stroke="#e0622c" stroke-width="1.400" stroke-linecap="round" stroke-linejoin="round"/></svg>
<div class="rt ui" style="left:1321.5px;top:109px;font-size:15px">表格样式</div>
<svg style="left:1387.5px;top:117.5px" width="7" height="5" viewBox="0 0 7 5"><path d="M0.8 0.8L3.5 3.500 6.200 0.8" fill="none" stroke="#2b2b2b" stroke-width="1.600" stroke-linecap="round" stroke-linejoin="round"/></svg>
<svg style="left:1297px;top:144px" width="21" height="21" viewBox="0 0 21 21"><path d="M0.500 4.500h20M0.500 16.500h20M4.500 0.500v20M16.500 0.500v20" fill="none" stroke="#3d4045" stroke-width="1.500"/></svg>
<div class="rt ui" style="left:1322px;top:143.5px;font-size:15px">单元格样式</div>
<svg style="left:1402.5px;top:152.5px" width="7" height="5" viewBox="0 0 7 5"><path d="M0.8 0.8L3.5 3.500 6.200 0.8" fill="none" stroke="#2b2b2b" stroke-width="1.600" stroke-linecap="round" stroke-linejoin="round"/></svg>
<svg style="left:1452px;top:108px" width="25" height="26" viewBox="0 0 25 26"><rect x="1" y="1" width="23" height="23.500" rx="1.500" fill="none" stroke="#3d4045" stroke-width="1.25" stroke-linecap="round" stroke-linejoin="round"/><path d="M1 6.500h23M12.500 6.500v12M8.500 15l4 4 4-4" fill="none" stroke="#3d4045" stroke-width="1.25" stroke-linecap="round" stroke-linejoin="round"/></svg>
<div class="rt ui" style="left:1445px;top:143.5px;font-size:15px">填充</div>
<svg style="left:1477.5px;top:152.5px" width="7" height="5" viewBox="0 0 7 5"><path d="M0.8 0.8L3.5 3.500 6.200 0.8" fill="none" stroke="#2b2b2b" stroke-width="1.600" stroke-linecap="round" stroke-linejoin="round"/></svg>
<svg style="left:1511px;top:109px" width="22" height="23" viewBox="0 0 22 23"><path d="M20.500 4V1H1.500l10 10.500-10 10.500h19v-3" fill="none" stroke="#3d4045" stroke-width="1.25" stroke-linecap="round" stroke-linejoin="round"/></svg>
<div class="rt ui" style="left:1502.5px;top:143.5px;font-size:15px">求和</div>
<svg style="left:1535.5px;top:152.5px" width="7" height="5" viewBox="0 0 7 5"><path d="M0.8 0.8L3.5 3.500 6.200 0.8" fill="none" stroke="#2b2b2b" stroke-width="1.600" stroke-linecap="round" stroke-linejoin="round"/></svg>
<svg style="left:1568px;top:109px" width="25" height="23" viewBox="0 0 25 23"><path d="M6 1h5.500l2 21H1.500zM4.800 8h7.300M3.300 15h9.500" fill="none" stroke="#3d4045" stroke-width="1.25" stroke-linecap="round" stroke-linejoin="round"/><path d="M20 1v20M16 17l4 4 4-4" fill="none" stroke="#2f5be7" stroke-width="1.400" stroke-linecap="round" stroke-linejoin="round"/></svg>
<div class="rt ui" style="left:1560px;top:143.5px;font-size:15px">排序</div>
<svg style="left:1593.5px;top:152.5px" width="7" height="5" viewBox="0 0 7 5"><path d="M0.8 0.8L3.5 3.500 6.200 0.8" fill="none" stroke="#2b2b2b" stroke-width="1.600" stroke-linecap="round" stroke-linejoin="round"/></svg>
<svg style="left:1628px;top:109px" width="23" height="25" viewBox="0 0 23 25"><path d="M1 1h21l-8 11v10l-5.500 1.500V12z" fill="none" stroke="#3d4045" stroke-width="1.25" stroke-linecap="round" stroke-linejoin="round"/><path d="M7.500 5h8" stroke="#0f8a5f" stroke-width="1.500" fill="none"/></svg>
<div class="rt ui" style="left:1618.5px;top:143.5px;font-size:15px">筛选</div>
<svg style="left:1651.5px;top:152.5px" width="7" height="5" viewBox="0 0 7 5"><path d="M0.8 0.8L3.5 3.500 6.200 0.8" fill="none" stroke="#2b2b2b" stroke-width="1.600" stroke-linecap="round" stroke-linejoin="round"/></svg>
<svg style="left:1684px;top:109px" width="26" height="24" viewBox="0 0 26 24"><rect x="1" y="1" width="24" height="22" rx="1.500" fill="none" stroke="#3d4045" stroke-width="1.25" stroke-linecap="round" stroke-linejoin="round"/><path d="M1 1l11.500 22M1 12l5.800 11" fill="none" stroke="#3d4045" stroke-width="1.25" stroke-linecap="round" stroke-linejoin="round"/><path d="M12.500 0v24M0 12h26" fill="none" stroke="#0f8a5f" stroke-width="1.600"/></svg>
<div class="rt ui" style="left:1676px;top:143.5px;font-size:15px">冻结</div>
<svg style="left:1709.5px;top:152.5px" width="7" height="5" viewBox="0 0 7 5"><path d="M0.8 0.8L3.5 3.500 6.200 0.8" fill="none" stroke="#2b2b2b" stroke-width="1.600" stroke-linecap="round" stroke-linejoin="round"/></svg>
<svg style="left:1742px;top:108px" width="26" height="26" viewBox="0 0 26 26"><circle cx="10" cy="10" r="8.500" fill="none" stroke="#3d4045" stroke-width="1.25" stroke-linecap="round" stroke-linejoin="round"/><path d="M16.200 16.200l8.800 8.800" fill="none" stroke="#3d4045" stroke-width="1.25" stroke-linecap="round" stroke-linejoin="round"/></svg>
<div class="rt ui" style="left:1734px;top:143.5px;font-size:15px">查找</div>
<svg style="left:1767.5px;top:152.5px" width="7" height="5" viewBox="0 0 7 5"><path d="M0.8 0.8L3.5 3.500 6.200 0.8" fill="none" stroke="#2b2b2b" stroke-width="1.600" stroke-linecap="round" stroke-linejoin="round"/></svg>
<div class="a" style="left:0;top:224px;width:1849px;height:12px;background:linear-gradient(rgba(238,239,240,0),#edeef0 4px,#efefef)"></div>
<div class="a" style="left:0;top:236px;width:1849px;height:25px;background:#efefef"></div>
<div class="a" style="left:0;top:260px;width:44px;height:708px;background:#efefef"></div>
<div class="a" style="left:44px;top:261px;width:1785px;height:707px;background:#fff"></div>
<div class="a" style="left:44px;top:235px;width:1277px;height:25px;background:#dcdcdc"></div>
<div class="a" style="left:0;top:261px;width:43px;height:57px;background:#dcdcdc"></div>
<svg style="left:19px;top:245px" width="8" height="8" viewBox="0 0 8 8"><path d="M7.500 0v7.500H0z" fill="#7a7a7a"/></svg>
<div class="a" style="left:44px;top:260px;width:1785px;height:1px;background:#d4d4d4"></div>
<div class="a" style="left:43px;top:261px;width:1px;height:707px;background:#d4d4d4"></div>
<div class="ch s" style="left:44px;width:162px">A</div>
<div class="ch s" style="left:207px;width:103px">B</div>
<div class="ch s" style="left:311px;width:71px">C</div>
<div class="ch s" style="left:383px;width:102px">D</div>
<div class="ch s" style="left:486px;width:91px">E</div>
<div class="ch s" style="left:578px;width:110px">F</div>
<div class="ch s" style="left:689px;width:91px">G</div>
<div class="ch s" style="left:781px;width:110px">H</div>
<div class="ch s" style="left:892px;width:71px">I</div>
<div class="ch s" style="left:964px;width:71px">J</div>
<div class="ch s" style="left:1036px;width:71px">K</div>
<div class="ch s" style="left:1108px;width:110px">L</div>
<div class="ch s" style="left:1219px;width:101px">M</div>
<div class="ch" style="left:1321px;width:75px">N</div>
<div class="ch" style="left:1397px;width:80px">O</div>
<div class="ch" style="left:1478px;width:80px">P</div>
<div class="ch" style="left:1559px;width:80px">Q</div>
<div class="ch" style="left:1640px;width:80px">R</div>
<div class="ch" style="left:1721px;width:80px">S</div>
<div class="a" style="left:1320px;top:236px;width:1px;height:24px;background:#d9d9d9"></div>
<div class="a" style="left:1396px;top:236px;width:1px;height:24px;background:#d9d9d9"></div>
<div class="a" style="left:1477px;top:236px;width:1px;height:24px;background:#d9d9d9"></div>
<div class="a" style="left:1558px;top:236px;width:1px;height:24px;background:#d9d9d9"></div>
<div class="a" style="left:1639px;top:236px;width:1px;height:24px;background:#d9d9d9"></div>
<div class="a" style="left:1720px;top:236px;width:1px;height:24px;background:#d9d9d9"></div>
<div class="a" style="left:1801px;top:236px;width:1px;height:24px;background:#d9d9d9"></div>
<div class="vl" style="left:206px"></div>
<div class="vl" style="left:310px"></div>
<div class="vl" style="left:382px"></div>
<div class="vl" style="left:485px"></div>
<div class="vl" style="left:577px"></div>
<div class="vl" style="left:688px"></div>
<div class="vl" style="left:780px"></div>
<div class="vl" style="left:891px"></div>
<div class="vl" style="left:963px"></div>
<div class="vl" style="left:1035px"></div>
<div class="vl" style="left:1107px"></div>
<div class="vl" style="left:1218px"></div>
<div class="vl" style="left:1320px"></div>
<div class="vl" style="left:1396px"></div>
<div class="vl" style="left:1477px"></div>
<div class="vl" style="left:1558px"></div>
<div class="vl" style="left:1639px"></div>
<div class="vl" style="left:1720px"></div>
<div class="vl" style="left:1801px"></div>
<div class="hl" style="top:318px"></div>
<div class="hl" style="top:347px"></div>
<div class="hl" style="top:371px"></div>
<div class="hl" style="top:395px"></div>
<div class="hl" style="top:419px"></div>
<div class="hl" style="top:443px"></div>
<div class="hl" style="top:467px"></div>
<div class="hl" style="top:491px"></div>
<div class="hl" style="top:515px"></div>
<div class="hl" style="top:539px"></div>
<div class="hl" style="top:563px"></div>
<div class="hl" style="top:587px"></div>
<div class="hl" style="top:611px"></div>
<div class="hl" style="top:635px"></div>
<div class="hl" style="top:659px"></div>
<div class="hl" style="top:683px"></div>
<div class="hl" style="top:707px"></div>
<div class="hl" style="top:731px"></div>
<div class="hl" style="top:755px"></div>
<div class="hl" style="top:779px"></div>
<div class="hl" style="top:803px"></div>
<div class="hl" style="top:827px"></div>
<div class="hl" style="top:851px"></div>
<div class="hl" style="top:875px"></div>
<div class="hl" style="top:899px"></div>
<div class="hl" style="top:923px"></div>
<div class="hl" style="top:947px"></div>
<div class="a" style="left:0;top:318px;width:43px;height:1px;background:#d9d9d9"></div>
<div class="rh" style="top:261px;height:57px;line-height:58px;color:#0b7a5c">1</div>
<div class="a" style="left:0;top:347px;width:43px;height:1px;background:#d9d9d9"></div>
<div class="rh" style="top:319px;height:28px;line-height:29px">2</div>
<div class="a" style="left:0;top:371px;width:43px;height:1px;background:#d9d9d9"></div>
<div class="rh" style="top:348px;height:23px;line-height:24px">3</div>
<div class="a" style="left:0;top:395px;width:43px;height:1px;background:#d9d9d9"></div>
<div class="rh" style="top:372px;height:23px;line-height:24px">4</div>
<div class="a" style="left:0;top:419px;width:43px;height:1px;background:#d9d9d9"></div>
<div class="rh" style="top:396px;height:23px;line-height:24px">5</div>
<div class="a" style="left:0;top:443px;width:43px;height:1px;background:#d9d9d9"></div>
<div class="rh" style="top:420px;height:23px;line-height:24px">6</div>
<div class="a" style="left:0;top:467px;width:43px;height:1px;background:#d9d9d9"></div>
<div class="rh" style="top:444px;height:23px;line-height:24px">7</div>
<div class="a" style="left:0;top:491px;width:43px;height:1px;background:#d9d9d9"></div>
<div class="rh" style="top:468px;height:23px;line-height:24px">8</div>
<div class="a" style="left:0;top:515px;width:43px;height:1px;background:#d9d9d9"></div>
<div class="rh" style="top:492px;height:23px;line-height:24px">9</div>
<div class="a" style="left:0;top:539px;width:43px;height:1px;background:#d9d9d9"></div>
<div class="rh" style="top:516px;height:23px;line-height:24px">10</div>
<div class="a" style="left:0;top:563px;width:43px;height:1px;background:#d9d9d9"></div>
<div class="rh" style="top:540px;height:23px;line-height:24px">11</div>
<div class="a" style="left:0;top:587px;width:43px;height:1px;background:#d9d9d9"></div>
<div class="rh" style="top:564px;height:23px;line-height:24px">12</div>
<div class="a" style="left:0;top:611px;width:43px;height:1px;background:#d9d9d9"></div>
<div class="rh" style="top:588px;height:23px;line-height:24px">13</div>
<div class="a" style="left:0;top:635px;width:43px;height:1px;background:#d9d9d9"></div>
<div class="rh" style="top:612px;height:23px;line-height:24px">14</div>
<div class="a" style="left:0;top:659px;width:43px;height:1px;background:#d9d9d9"></div>
<div class="rh" style="top:636px;height:23px;line-height:24px">15</div>
<div class="a" style="left:0;top:683px;width:43px;height:1px;background:#d9d9d9"></div>
<div class="rh" style="top:660px;height:23px;line-height:24px">16</div>
<div class="a" style="left:0;top:707px;width:43px;height:1px;background:#d9d9d9"></div>
<div class="rh" style="top:684px;height:23px;line-height:24px">17</div>
<div class="a" style="left:0;top:731px;width:43px;height:1px;background:#d9d9d9"></div>
<div class="rh" style="top:708px;height:23px;line-height:24px">18</div>
<div class="a" style="left:0;top:755px;width:43px;height:1px;background:#d9d9d9"></div>
<div class="rh" style="top:732px;height:23px;line-height:24px">19</div>
<div class="a" style="left:0;top:779px;width:43px;height:1px;background:#d9d9d9"></div>
<div class="rh" style="top:756px;height:23px;line-height:24px">20</div>
<div class="a" style="left:0;top:803px;width:43px;height:1px;background:#d9d9d9"></div>
<div class="rh" style="top:780px;height:23px;line-height:24px">21</div>
<div class="a" style="left:0;top:827px;width:43px;height:1px;background:#d9d9d9"></div>
<div class="rh" style="top:804px;height:23px;line-height:24px">22</div>
<div class="a" style="left:0;top:851px;width:43px;height:1px;background:#d9d9d9"></div>
<div class="rh" style="top:828px;height:23px;line-height:24px">23</div>
<div class="a" style="left:0;top:875px;width:43px;height:1px;background:#d9d9d9"></div>
<div class="rh" style="top:852px;height:23px;line-height:24px">24</div>
<div class="a" style="left:0;top:899px;width:43px;height:1px;background:#d9d9d9"></div>
<div class="rh" style="top:876px;height:23px;line-height:24px">25</div>
<div class="a" style="left:0;top:923px;width:43px;height:1px;background:#d9d9d9"></div>
<div class="rh" style="top:900px;height:23px;line-height:24px">26</div>
<div class="a" style="left:0;top:947px;width:43px;height:1px;background:#d9d9d9"></div>
<div class="rh" style="top:924px;height:23px;line-height:24px">27</div>
<div class="rh" style="top:948px;height:20px;line-height:24px">28</div>
<div class="a" style="left:44px;top:261px;width:1276px;height:57px;background:#fff"></div>
<div class="a ui" style="left:44px;top:261px;width:1276px;height:57px;line-height:55px;text-align:center;font-size:28.050px;padding-left:3px;color:#000;white-space:nowrap">福建医科大学附属第二医院东海院区东海收费处工作量统计表(所有病人)</div>
<div class="a" style="left:44px;top:319px;width:1276px;height:28px;background:#fff"></div>
<div class="c r2" style="left:48px;top:322px;height:27px;line-height:27px;width:1000px">统计时间：<i>2</i><i>0</i><i>2</i><i>4</i><i>-</i><i>0</i><i>4</i><i>-</i><i>0</i><i>1</i><i>&nbsp;</i><i>0</i><i>0</i><i>:</i><i>0</i><i>0</i><i>:</i><i>0</i><i>0</i><i>&nbsp;</i>至<i>&nbsp;</i><i>2</i><i>3</i><i>:</i><i>5</i><i>9</i><i>:</i><i>5</i><i>9</i><i>&nbsp;</i><i>2</i><i>3</i><i>:</i><i>5</i><i>9</i><i>:</i><i>5</i><i>9</i><i>&nbsp;</i><i>&nbsp;</i>合计金额：<i>u</i><i>n</i><i>d</i><i>e</i><i>f</i><i>i</i><i>n</i><i>e</i><i>d</i></div>
<div class="a" style="left:44px;top:347px;width:1277px;height:25px;border:1px solid #000;border-left:0"></div>
<div class="a" style="left:206px;top:347px;width:1px;height:25px;background:#000"></div>
<div class="a" style="left:310px;top:347px;width:1px;height:25px;background:#000"></div>
<div class="a" style="left:382px;top:347px;width:1px;height:25px;background:#000"></div>
<div class="a" style="left:485px;top:347px;width:1px;height:25px;background:#000"></div>
<div class="a" style="left:577px;top:347px;width:1px;height:25px;background:#000"></div>
<div class="a" style="left:688px;top:347px;width:1px;height:25px;background:#000"></div>
<div class="a" style="left:780px;top:347px;width:1px;height:25px;background:#000"></div>
<div class="a" style="left:891px;top:347px;width:1px;height:25px;background:#000"></div>
<div class="a" style="left:963px;top:347px;width:1px;height:25px;background:#000"></div>
<div class="a" style="left:1035px;top:347px;width:1px;height:25px;background:#000"></div>
<div class="a" style="left:1107px;top:347px;width:1px;height:25px;background:#000"></div>
<div class="a" style="left:1218px;top:347px;width:1px;height:25px;background:#000"></div>
<div class="c hd" style="left:44px;top:350px;width:162px">诊查科室</div>
<div class="c hd" style="left:207px;top:350px;width:103px">就诊医生</div>
<div class="c hd" style="left:311px;top:350px;width:71px">胸卡号</div>
<div class="c hd" style="left:383px;top:350px;width:102px">诊查类别</div>
<div class="c hd" style="left:486px;top:350px;width:91px">就诊时间</div>
<div class="c hd" style="left:578px;top:350px;width:110px">工作量绩效</div>
<div class="c hd" style="left:689px;top:350px;width:91px">诊查人数</div>
<div class="c hd" style="left:781px;top:350px;width:110px">诊查费合计</div>
<div class="c hd" style="left:892px;top:350px;width:71px">诊查费</div>
<div class="c hd" style="left:964px;top:350px;width:71px">诊察费</div>
<div class="c hd" style="left:1036px;top:350px;width:71px">其他费</div>
<div class="c hd" style="left:1108px;top:350px;width:110px">空诊查人数</div>
<div class="c hd" style="left:1219px;top:350px;width:101px">空诊查率<i class="w p">%</i></div>
<div class="c" style="left:47px;top:374px;width:159px;height:21px">东海门急诊</div>
<div class="c" style="left:210px;top:374px;width:100px;height:21px">白志刚<i class="w">C</i><i>0</i><i>6</i><i>1</i><i>9</i></div>
<div class="c" style="left:314px;top:374px;width:68px;height:21px"><i class="w">C</i><i>0</i><i>6</i><i>1</i><i>9</i></div>
<div class="c" style="left:386px;top:374px;width:99px;height:21px">副主任医生</div>
<div class="c" style="left:489px;top:374px;width:88px;height:21px">上午</div>
<div class="c" style="left:581px;top:374px;width:107px;height:21px"><i>3</i><i>0</i></div>
<div class="g" style="left:577px;top:372px"></div>
<div class="c" style="left:692px;top:374px;width:88px;height:21px"><i>5</i></div>
<div class="g" style="left:688px;top:372px"></div>
<div class="c" style="left:784px;top:374px;width:107px;height:21px"><i>1</i><i>5</i><i>0</i></div>
<div class="g" style="left:780px;top:372px"></div>
<div class="c" style="left:895px;top:374px;width:68px;height:21px"><i>0</i></div>
<div class="g" style="left:891px;top:372px"></div>
<div class="c" style="left:1039px;top:374px;width:68px;height:21px"><i>0</i></div>
<div class="g" style="left:1035px;top:372px"></div>
<div class="c" style="left:1111px;top:374px;width:107px;height:21px"><i>1</i></div>
<div class="g" style="left:1107px;top:372px"></div>
<div class="c" style="left:1222px;top:374px;width:98px;height:21px"><i>1</i></div>
<div class="g" style="left:1218px;top:372px"></div>
<div class="c" style="left:47px;top:398px;width:159px;height:21px">东海门急诊</div>
<div class="c" style="left:210px;top:398px;width:100px;height:21px">白志刚<i class="w">C</i><i>0</i><i>6</i><i>1</i><i>9</i></div>
<div class="c" style="left:314px;top:398px;width:68px;height:21px"><i class="w">C</i><i>0</i><i>6</i><i>1</i><i>9</i></div>
<div class="c" style="left:386px;top:398px;width:99px;height:21px">副主任医生</div>
<div class="c" style="left:489px;top:398px;width:88px;height:21px">下午</div>
<div class="c" style="left:581px;top:398px;width:107px;height:21px"><i>1</i><i>2</i></div>
<div class="g" style="left:577px;top:396px"></div>
<div class="c" style="left:692px;top:398px;width:88px;height:21px"><i>2</i></div>
<div class="g" style="left:688px;top:396px"></div>
<div class="c" style="left:784px;top:398px;width:107px;height:21px"><i>6</i><i>0</i></div>
<div class="g" style="left:780px;top:396px"></div>
<div class="c" style="left:895px;top:398px;width:68px;height:21px"><i>0</i></div>
<div class="g" style="left:891px;top:396px"></div>
<div class="c" style="left:1039px;top:398px;width:68px;height:21px"><i>0</i></div>
<div class="g" style="left:1035px;top:396px"></div>
<div class="c" style="left:1111px;top:398px;width:107px;height:21px"><i>1</i></div>
<div class="g" style="left:1107px;top:396px"></div>
<div class="c" style="left:1222px;top:398px;width:98px;height:21px"><i>1</i></div>
<div class="g" style="left:1218px;top:396px"></div>
<div class="c" style="left:47px;top:422px;width:159px;height:21px">东海肿瘤放射治疗门诊</div>
<div class="c" style="left:210px;top:422px;width:100px;height:21px">白志刚<i class="w">C</i><i>0</i><i>6</i><i>1</i><i>9</i></div>
<div class="c" style="left:314px;top:422px;width:68px;height:21px"><i class="w">C</i><i>0</i><i>6</i><i>1</i><i>9</i></div>
<div class="c" style="left:386px;top:422px;width:99px;height:21px">副主任医生</div>
<div class="c" style="left:489px;top:422px;width:88px;height:21px">周日上午</div>
<div class="c" style="left:581px;top:422px;width:107px;height:21px"><i>1</i><i>6</i><i>2</i></div>
<div class="g" style="left:577px;top:420px"></div>
<div class="c" style="left:692px;top:422px;width:88px;height:21px"><i>2</i><i>7</i></div>
<div class="g" style="left:688px;top:420px"></div>
<div class="c" style="left:784px;top:422px;width:107px;height:21px"><i>8</i><i>1</i><i>0</i></div>
<div class="g" style="left:780px;top:420px"></div>
<div class="c" style="left:895px;top:422px;width:68px;height:21px"><i>0</i></div>
<div class="g" style="left:891px;top:420px"></div>
<div class="c" style="left:1039px;top:422px;width:68px;height:21px"><i>0</i></div>
<div class="g" style="left:1035px;top:420px"></div>
<div class="c" style="left:1111px;top:422px;width:107px;height:21px"><i>1</i><i>1</i></div>
<div class="g" style="left:1107px;top:420px"></div>
<div class="c" style="left:1222px;top:422px;width:98px;height:21px"><i>1</i><i>1</i></div>
<div class="g" style="left:1218px;top:420px"></div>
<div class="c" style="left:47px;top:446px;width:159px;height:21px">东海肿瘤放射治疗门诊</div>
<div class="c" style="left:210px;top:446px;width:100px;height:21px">白志刚<i class="w">C</i><i>0</i><i>6</i><i>1</i><i>9</i></div>
<div class="c" style="left:314px;top:446px;width:68px;height:21px"><i class="w">C</i><i>0</i><i>6</i><i>1</i><i>9</i></div>
<div class="c" style="left:386px;top:446px;width:99px;height:21px">副主任医生</div>
<div class="c" style="left:489px;top:446px;width:88px;height:21px">下午</div>
<div class="c" style="left:581px;top:446px;width:107px;height:21px"><i>5</i><i>4</i></div>
<div class="g" style="left:577px;top:444px"></div>
<div class="c" style="left:692px;top:446px;width:88px;height:21px"><i>9</i></div>
<div class="g" style="left:688px;top:444px"></div>
<div class="c" style="left:784px;top:446px;width:107px;height:21px"><i>2</i><i>7</i><i>0</i></div>
<div class="g" style="left:780px;top:444px"></div>
<div class="c" style="left:895px;top:446px;width:68px;height:21px"><i>0</i></div>
<div class="g" style="left:891px;top:444px"></div>
<div class="c" style="left:1039px;top:446px;width:68px;height:21px"><i>0</i></div>
<div class="g" style="left:1035px;top:444px"></div>
<div class="c" style="left:1111px;top:446px;width:107px;height:21px"><i>4</i></div>
<div class="g" style="left:1107px;top:444px"></div>
<div class="c" style="left:1222px;top:446px;width:98px;height:21px"><i>4</i></div>
<div class="g" style="left:1218px;top:444px"></div>
<div class="c" style="left:47px;top:470px;width:159px;height:21px">东海肿瘤放射治疗门诊</div>
<div class="c" style="left:210px;top:470px;width:100px;height:21px">白志刚<i class="w">C</i><i>0</i><i>6</i><i>1</i><i>9</i></div>
<div class="c" style="left:314px;top:470px;width:68px;height:21px"><i class="w">C</i><i>0</i><i>6</i><i>1</i><i>9</i></div>
<div class="c" style="left:386px;top:470px;width:99px;height:21px">副主任医生</div>
<div class="c" style="left:489px;top:470px;width:88px;height:21px">上午</div>
<div class="c" style="left:581px;top:470px;width:107px;height:21px"><i>1</i><i>2</i><i>6</i><i>0</i></div>
<div class="g" style="left:577px;top:468px"></div>
<div class="c" style="left:692px;top:470px;width:88px;height:21px"><i>2</i><i>1</i><i>0</i></div>
<div class="g" style="left:688px;top:468px"></div>
<div class="c" style="left:784px;top:470px;width:107px;height:21px"><i>6</i><i>3</i><i>0</i><i>0</i></div>
<div class="g" style="left:780px;top:468px"></div>
<div class="c" style="left:895px;top:470px;width:68px;height:21px"><i>0</i></div>
<div class="g" style="left:891px;top:468px"></div>
<div class="c" style="left:1039px;top:470px;width:68px;height:21px"><i>0</i></div>
<div class="g" style="left:1035px;top:468px"></div>
<div class="c" style="left:1111px;top:470px;width:107px;height:21px"><i>8</i><i>6</i></div>
<div class="g" style="left:1107px;top:468px"></div>
<div class="c" style="left:1222px;top:470px;width:98px;height:21px"><i>8</i><i>6</i></div>
<div class="g" style="left:1218px;top:468px"></div>
<div class="c" style="left:47px;top:494px;width:159px;height:21px">小计</div>
<div class="c" style="left:210px;top:494px;width:100px;height:21px">白志刚<i class="w">C</i><i>0</i><i>6</i><i>1</i><i>9</i></div>
<div class="c" style="left:314px;top:494px;width:68px;height:21px"><i class="w">C</i><i>0</i><i>6</i><i>1</i><i>9</i></div>
<div class="c" style="left:386px;top:494px;width:99px;height:21px">副主任医生</div>
<div class="c" style="left:581px;top:494px;width:107px;height:21px"><i>1</i><i>6</i><i>2</i></div>
<div class="g" style="left:577px;top:492px"></div>
<div class="c" style="left:692px;top:494px;width:88px;height:21px"><i>2</i><i>7</i></div>
<div class="g" style="left:688px;top:492px"></div>
<div class="c" style="left:784px;top:494px;width:107px;height:21px"><i>8</i><i>1</i><i>0</i></div>
<div class="g" style="left:780px;top:492px"></div>
<div class="c" style="left:895px;top:494px;width:68px;height:21px"><i>0</i></div>
<div class="g" style="left:891px;top:492px"></div>
<div class="c" style="left:1039px;top:494px;width:68px;height:21px"><i>0</i></div>
<div class="g" style="left:1035px;top:492px"></div>
<div class="c" style="left:1111px;top:494px;width:107px;height:21px"><i>1</i><i>1</i></div>
<div class="g" style="left:1107px;top:492px"></div>
<div class="c" style="left:1222px;top:494px;width:98px;height:21px"><i>1</i><i>1</i></div>
<div class="g" style="left:1218px;top:492px"></div>
<div class="c" style="left:47px;top:518px;width:159px;height:21px">小计</div>
<div class="c" style="left:210px;top:518px;width:100px;height:21px">白志刚<i class="w">C</i><i>0</i><i>6</i><i>1</i><i>9</i></div>
<div class="c" style="left:314px;top:518px;width:68px;height:21px"><i class="w">C</i><i>0</i><i>6</i><i>1</i><i>9</i></div>
<div class="c" style="left:386px;top:518px;width:99px;height:21px">副主任医生</div>
<div class="c" style="left:581px;top:518px;width:107px;height:21px"><i>6</i><i>6</i></div>
<div class="g" style="left:577px;top:516px"></div>
<div class="c" style="left:692px;top:518px;width:88px;height:21px"><i>1</i><i>1</i></div>
<div class="g" style="left:688px;top:516px"></div>
<div class="c" style="left:784px;top:518px;width:107px;height:21px"><i>3</i><i>3</i><i>0</i></div>
<div class="g" style="left:780px;top:516px"></div>
<div class="c" style="left:895px;top:518px;width:68px;height:21px"><i>0</i></div>
<div class="g" style="left:891px;top:516px"></div>
<div class="c" style="left:1039px;top:518px;width:68px;height:21px"><i>0</i></div>
<div class="g" style="left:1035px;top:516px"></div>
<div class="c" style="left:1111px;top:518px;width:107px;height:21px"><i>5</i></div>
<div class="g" style="left:1107px;top:516px"></div>
<div class="c" style="left:1222px;top:518px;width:98px;height:21px"><i>5</i></div>
<div class="g" style="left:1218px;top:516px"></div>
<div class="c" style="left:47px;top:542px;width:159px;height:21px">小计</div>
<div class="c" style="left:210px;top:542px;width:100px;height:21px">白志刚<i class="w">C</i><i>0</i><i>6</i><i>1</i><i>9</i></div>
<div class="c" style="left:314px;top:542px;width:68px;height:21px"><i class="w">C</i><i>0</i><i>6</i><i>1</i><i>9</i></div>
<div class="c" style="left:386px;top:542px;width:99px;height:21px">副主任医生</div>
<div class="c" style="left:581px;top:542px;width:107px;height:21px"><i>1</i><i>2</i><i>9</i><i>0</i></div>
<div class="g" style="left:577px;top:540px"></div>
<div class="c" style="left:692px;top:542px;width:88px;height:21px"><i>2</i><i>1</i><i>5</i></div>
<div class="g" style="left:688px;top:540px"></div>
<div class="c" style="left:784px;top:542px;width:107px;height:21px"><i>6</i><i>4</i><i>5</i><i>0</i></div>
<div class="g" style="left:780px;top:540px"></div>
<div class="c" style="left:895px;top:542px;width:68px;height:21px"><i>0</i></div>
<div class="g" style="left:891px;top:540px"></div>
<div class="c" style="left:1039px;top:542px;width:68px;height:21px"><i>0</i></div>
<div class="g" style="left:1035px;top:540px"></div>
<div class="c" style="left:1111px;top:542px;width:107px;height:21px"><i>8</i><i>7</i></div>
<div class="g" style="left:1107px;top:540px"></div>
<div class="c" style="left:1222px;top:542px;width:98px;height:21px"><i>8</i><i>7</i></div>
<div class="g" style="left:1218px;top:540px"></div>
<div class="c" style="left:47px;top:566px;width:159px;height:21px">泌尿外科门诊</div>
<div class="c" style="left:210px;top:566px;width:100px;height:21px">蔡芳震<i>b</i><i>0</i><i>6</i><i>9</i><i>9</i></div>
<div class="c" style="left:314px;top:566px;width:68px;height:21px"><i>b</i><i>0</i><i>6</i><i>9</i><i>9</i></div>
<div class="c" style="left:386px;top:566px;width:99px;height:21px">副主任医生</div>
<div class="c" style="left:489px;top:566px;width:88px;height:21px">上午</div>
<div class="c" style="left:581px;top:566px;width:107px;height:21px"><i>2</i><i>7</i><i>6</i></div>
<div class="g" style="left:577px;top:564px"></div>
<div class="c" style="left:692px;top:566px;width:88px;height:21px"><i>4</i><i>6</i></div>
<div class="g" style="left:688px;top:564px"></div>
<div class="c" style="left:784px;top:566px;width:107px;height:21px"><i>1</i><i>3</i><i>8</i><i>0</i></div>
<div class="g" style="left:780px;top:564px"></div>
<div class="c" style="left:895px;top:566px;width:68px;height:21px"><i>0</i></div>
<div class="g" style="left:891px;top:564px"></div>
<div class="c" style="left:1039px;top:566px;width:68px;height:21px"><i>0</i></div>
<div class="g" style="left:1035px;top:564px"></div>
<div class="c" style="left:1111px;top:566px;width:107px;height:21px"><i>1</i><i>6</i></div>
<div class="g" style="left:1107px;top:564px"></div>
<div class="c" style="left:1222px;top:566px;width:98px;height:21px"><i>1</i><i>6</i></div>
<div class="g" style="left:1218px;top:564px"></div>
<div class="c" style="left:47px;top:590px;width:159px;height:21px">泌尿外科门诊</div>
<div class="c" style="left:210px;top:590px;width:100px;height:21px">蔡芳震<i>b</i><i>0</i><i>6</i><i>9</i><i>9</i></div>
<div class="c" style="left:314px;top:590px;width:68px;height:21px"><i>b</i><i>0</i><i>6</i><i>9</i><i>9</i></div>
<div class="c" style="left:386px;top:590px;width:99px;height:21px">副主任医生</div>
<div class="c" style="left:489px;top:590px;width:88px;height:21px">周日上午</div>
<div class="c" style="left:581px;top:590px;width:107px;height:21px"><i>1</i><i>2</i><i>0</i></div>
<div class="g" style="left:577px;top:588px"></div>
<div class="c" style="left:692px;top:590px;width:88px;height:21px"><i>2</i><i>0</i></div>
<div class="g" style="left:688px;top:588px"></div>
<div class="c" style="left:784px;top:590px;width:107px;height:21px"><i>6</i><i>0</i><i>0</i></div>
<div class="g" style="left:780px;top:588px"></div>
<div class="c" style="left:895px;top:590px;width:68px;height:21px"><i>0</i></div>
<div class="g" style="left:891px;top:588px"></div>
<div class="c" style="left:1039px;top:590px;width:68px;height:21px"><i>0</i></div>
<div class="g" style="left:1035px;top:588px"></div>
<div class="c" style="left:1111px;top:590px;width:107px;height:21px"><i>7</i></div>
<div class="g" style="left:1107px;top:588px"></div>
<div class="c" style="left:1222px;top:590px;width:98px;height:21px"><i>7</i></div>
<div class="g" style="left:1218px;top:588px"></div>
<div class="c" style="left:47px;top:614px;width:159px;height:21px">泌尿外科门诊</div>
<div class="c" style="left:210px;top:614px;width:100px;height:21px">蔡芳震<i>b</i><i>0</i><i>6</i><i>9</i><i>9</i></div>
<div class="c" style="left:314px;top:614px;width:68px;height:21px"><i>b</i><i>0</i><i>6</i><i>9</i><i>9</i></div>
<div class="c" style="left:386px;top:614px;width:99px;height:21px">副主任医生</div>
<div class="c" style="left:489px;top:614px;width:88px;height:21px">周六上午</div>
<div class="c" style="left:581px;top:614px;width:107px;height:21px"><i>1</i><i>0</i><i>8</i></div>
<div class="g" style="left:577px;top:612px"></div>
<div class="c" style="left:692px;top:614px;width:88px;height:21px"><i>1</i><i>8</i></div>
<div class="g" style="left:688px;top:612px"></div>
<div class="c" style="left:784px;top:614px;width:107px;height:21px"><i>5</i><i>4</i><i>0</i></div>
<div class="g" style="left:780px;top:612px"></div>
<div class="c" style="left:895px;top:614px;width:68px;height:21px"><i>0</i></div>
<div class="g" style="left:891px;top:612px"></div>
<div class="c" style="left:1039px;top:614px;width:68px;height:21px"><i>0</i></div>
<div class="g" style="left:1035px;top:612px"></div>
<div class="c" style="left:1111px;top:614px;width:107px;height:21px"><i>2</i></div>
<div class="g" style="left:1107px;top:612px"></div>
<div class="c" style="left:1222px;top:614px;width:98px;height:21px"><i>2</i></div>
<div class="g" style="left:1218px;top:612px"></div>
<div class="c" style="left:47px;top:638px;width:159px;height:21px">泌尿外科门诊</div>
<div class="c" style="left:210px;top:638px;width:100px;height:21px">蔡芳震<i>b</i><i>0</i><i>6</i><i>9</i><i>9</i></div>
<div class="c" style="left:314px;top:638px;width:68px;height:21px"><i>b</i><i>0</i><i>6</i><i>9</i><i>9</i></div>
<div class="c" style="left:386px;top:638px;width:99px;height:21px">副主任医生</div>
<div class="c" style="left:489px;top:638px;width:88px;height:21px">下午</div>
<div class="c" style="left:581px;top:638px;width:107px;height:21px"><i>1</i><i>8</i><i>0</i></div>
<div class="g" style="left:577px;top:636px"></div>
<div class="c" style="left:692px;top:638px;width:88px;height:21px"><i>3</i><i>0</i></div>
<div class="g" style="left:688px;top:636px"></div>
<div class="c" style="left:784px;top:638px;width:107px;height:21px"><i>9</i><i>0</i><i>0</i></div>
<div class="g" style="left:780px;top:636px"></div>
<div class="c" style="left:895px;top:638px;width:68px;height:21px"><i>0</i></div>
<div class="g" style="left:891px;top:636px"></div>
<div class="c" style="left:1039px;top:638px;width:68px;height:21px"><i>0</i></div>
<div class="g" style="left:1035px;top:636px"></div>
<div class="c" style="left:1111px;top:638px;width:107px;height:21px"><i>1</i><i>6</i></div>
<div class="g" style="left:1107px;top:636px"></div>
<div class="c" style="left:1222px;top:638px;width:98px;height:21px"><i>1</i><i>6</i></div>
<div class="g" style="left:1218px;top:636px"></div>
<div class="c" style="left:47px;top:662px;width:159px;height:21px">小计</div>
<div class="c" style="left:210px;top:662px;width:100px;height:21px">蔡芳震<i>b</i><i>0</i><i>6</i><i>9</i><i>9</i></div>
<div class="c" style="left:314px;top:662px;width:68px;height:21px"><i>b</i><i>0</i><i>6</i><i>9</i><i>9</i></div>
<div class="c" style="left:386px;top:662px;width:99px;height:21px">副主任医生</div>
<div class="c" style="left:581px;top:662px;width:107px;height:21px"><i>2</i><i>7</i><i>6</i></div>
<div class="g" style="left:577px;top:660px"></div>
<div class="c" style="left:692px;top:662px;width:88px;height:21px"><i>4</i><i>6</i></div>
<div class="g" style="left:688px;top:660px"></div>
<div class="c" style="left:784px;top:662px;width:107px;height:21px"><i>1</i><i>3</i><i>8</i><i>0</i></div>
<div class="g" style="left:780px;top:660px"></div>
<div class="c" style="left:895px;top:662px;width:68px;height:21px"><i>0</i></div>
<div class="g" style="left:891px;top:660px"></div>
<div class="c" style="left:1039px;top:662px;width:68px;height:21px"><i>0</i></div>
<div class="g" style="left:1035px;top:660px"></div>
<div class="c" style="left:1111px;top:662px;width:107px;height:21px"><i>1</i><i>6</i></div>
<div class="g" style="left:1107px;top:660px"></div>
<div class="c" style="left:1222px;top:662px;width:98px;height:21px"><i>1</i><i>6</i></div>
<div class="g" style="left:1218px;top:660px"></div>
<div class="c" style="left:47px;top:686px;width:159px;height:21px">小计</div>
<div class="c" style="left:210px;top:686px;width:100px;height:21px">蔡芳震<i>b</i><i>0</i><i>6</i><i>9</i><i>9</i></div>
<div class="c" style="left:314px;top:686px;width:68px;height:21px"><i>b</i><i>0</i><i>6</i><i>9</i><i>9</i></div>
<div class="c" style="left:386px;top:686px;width:99px;height:21px">副主任医生</div>
<div class="c" style="left:581px;top:686px;width:107px;height:21px"><i>1</i><i>8</i><i>0</i></div>
<div class="g" style="left:577px;top:684px"></div>
<div class="c" style="left:692px;top:686px;width:88px;height:21px"><i>3</i><i>0</i></div>
<div class="g" style="left:688px;top:684px"></div>
<div class="c" style="left:784px;top:686px;width:107px;height:21px"><i>9</i><i>0</i><i>0</i></div>
<div class="g" style="left:780px;top:684px"></div>
<div class="c" style="left:895px;top:686px;width:68px;height:21px"><i>0</i></div>
<div class="g" style="left:891px;top:684px"></div>
<div class="c" style="left:1039px;top:686px;width:68px;height:21px"><i>0</i></div>
<div class="g" style="left:1035px;top:684px"></div>
<div class="c" style="left:1111px;top:686px;width:107px;height:21px"><i>1</i><i>6</i></div>
<div class="g" style="left:1107px;top:684px"></div>
<div class="c" style="left:1222px;top:686px;width:98px;height:21px"><i>1</i><i>6</i></div>
<div class="g" style="left:1218px;top:684px"></div>
<div class="c" style="left:47px;top:710px;width:159px;height:21px">小计</div>
<div class="c" style="left:210px;top:710px;width:100px;height:21px">蔡芳震<i>b</i><i>0</i><i>6</i><i>9</i><i>9</i></div>
<div class="c" style="left:314px;top:710px;width:68px;height:21px"><i>b</i><i>0</i><i>6</i><i>9</i><i>9</i></div>
<div class="c" style="left:386px;top:710px;width:99px;height:21px">副主任医生</div>
<div class="c" style="left:581px;top:710px;width:107px;height:21px"><i>1</i><i>0</i><i>8</i></div>
<div class="g" style="left:577px;top:708px"></div>
<div class="c" style="left:692px;top:710px;width:88px;height:21px"><i>1</i><i>8</i></div>
<div class="g" style="left:688px;top:708px"></div>
<div class="c" style="left:784px;top:710px;width:107px;height:21px"><i>5</i><i>4</i><i>0</i></div>
<div class="g" style="left:780px;top:708px"></div>
<div class="c" style="left:895px;top:710px;width:68px;height:21px"><i>0</i></div>
<div class="g" style="left:891px;top:708px"></div>
<div class="c" style="left:1039px;top:710px;width:68px;height:21px"><i>0</i></div>
<div class="g" style="left:1035px;top:708px"></div>
<div class="c" style="left:1111px;top:710px;width:107px;height:21px"><i>2</i></div>
<div class="g" style="left:1107px;top:708px"></div>
<div class="c" style="left:1222px;top:710px;width:98px;height:21px"><i>2</i></div>
<div class="g" style="left:1218px;top:708px"></div>
<div class="c" style="left:47px;top:734px;width:159px;height:21px">小计</div>
<div class="c" style="left:210px;top:734px;width:100px;height:21px">蔡芳震<i>b</i><i>0</i><i>6</i><i>9</i><i>9</i></div>
<div class="c" style="left:314px;top:734px;width:68px;height:21px"><i>b</i><i>0</i><i>6</i><i>9</i><i>9</i></div>
<div class="c" style="left:386px;top:734px;width:99px;height:21px">副主任医生</div>
<div class="c" style="left:581px;top:734px;width:107px;height:21px"><i>1</i><i>2</i><i>0</i></div>
<div class="g" style="left:577px;top:732px"></div>
<div class="c" style="left:692px;top:734px;width:88px;height:21px"><i>2</i><i>0</i></div>
<div class="g" style="left:688px;top:732px"></div>
<div class="c" style="left:784px;top:734px;width:107px;height:21px"><i>6</i><i>0</i><i>0</i></div>
<div class="g" style="left:780px;top:732px"></div>
<div class="c" style="left:895px;top:734px;width:68px;height:21px"><i>0</i></div>
<div class="g" style="left:891px;top:732px"></div>
<div class="c" style="left:1039px;top:734px;width:68px;height:21px"><i>0</i></div>
<div class="g" style="left:1035px;top:732px"></div>
<div class="c" style="left:1111px;top:734px;width:107px;height:21px"><i>7</i></div>
<div class="g" style="left:1107px;top:732px"></div>
<div class="c" style="left:1222px;top:734px;width:98px;height:21px"><i>7</i></div>
<div class="g" style="left:1218px;top:732px"></div>
<div class="c" style="left:47px;top:758px;width:159px;height:21px">门急诊</div>
<div class="c" style="left:210px;top:758px;width:100px;height:21px">蔡风景<i class="w">B</i><i>0</i><i>7</i><i>1</i><i>3</i></div>
<div class="c" style="left:314px;top:758px;width:68px;height:21px"><i class="w">B</i><i>0</i><i>7</i><i>1</i><i>3</i></div>
<div class="c" style="left:386px;top:758px;width:99px;height:21px">副主任医生</div>
<div class="c" style="left:489px;top:758px;width:88px;height:21px">上午</div>
<div class="c" style="left:581px;top:758px;width:107px;height:21px"><i>1</i><i>2</i></div>
<div class="g" style="left:577px;top:756px"></div>
<div class="c" style="left:692px;top:758px;width:88px;height:21px"><i>2</i></div>
<div class="g" style="left:688px;top:756px"></div>
<div class="c" style="left:784px;top:758px;width:107px;height:21px"><i>6</i><i>0</i></div>
<div class="g" style="left:780px;top:756px"></div>
<div class="c" style="left:895px;top:758px;width:68px;height:21px"><i>0</i></div>
<div class="g" style="left:891px;top:756px"></div>
<div class="c" style="left:1039px;top:758px;width:68px;height:21px"><i>0</i></div>
<div class="g" style="left:1035px;top:756px"></div>
<div class="c" style="left:1111px;top:758px;width:107px;height:21px"><i>0</i></div>
<div class="g" style="left:1107px;top:756px"></div>
<div class="c" style="left:1222px;top:758px;width:98px;height:21px"><i>0</i></div>
<div class="g" style="left:1218px;top:756px"></div>
<div class="c" style="left:47px;top:782px;width:159px;height:21px">门急诊</div>
<div class="c" style="left:210px;top:782px;width:100px;height:21px">蔡风景<i class="w">B</i><i>0</i><i>7</i><i>1</i><i>3</i></div>
<div class="c" style="left:314px;top:782px;width:68px;height:21px"><i class="w">B</i><i>0</i><i>7</i><i>1</i><i>3</i></div>
<div class="c" style="left:386px;top:782px;width:99px;height:21px">副主任医生</div>
<div class="c" style="left:489px;top:782px;width:88px;height:21px">周六上午</div>
<div class="c" style="left:581px;top:782px;width:107px;height:21px"><i>6</i></div>
<div class="g" style="left:577px;top:780px"></div>
<div class="c" style="left:692px;top:782px;width:88px;height:21px"><i>1</i></div>
<div class="g" style="left:688px;top:780px"></div>
<div class="c" style="left:784px;top:782px;width:107px;height:21px"><i>3</i><i>0</i></div>
<div class="g" style="left:780px;top:780px"></div>
<div class="c" style="left:895px;top:782px;width:68px;height:21px"><i>0</i></div>
<div class="g" style="left:891px;top:780px"></div>
<div class="c" style="left:1039px;top:782px;width:68px;height:21px"><i>0</i></div>
<div class="g" style="left:1035px;top:780px"></div>
<div class="c" style="left:1111px;top:782px;width:107px;height:21px"><i>0</i></div>
<div class="g" style="left:1107px;top:780px"></div>
<div class="c" style="left:1222px;top:782px;width:98px;height:21px"><i>0</i></div>
<div class="g" style="left:1218px;top:780px"></div>
<div class="c" style="left:47px;top:806px;width:159px;height:21px">门急诊</div>
<div class="c" style="left:210px;top:806px;width:100px;height:21px">蔡风景<i class="w">B</i><i>0</i><i>7</i><i>1</i><i>3</i></div>
<div class="c" style="left:314px;top:806px;width:68px;height:21px"><i class="w">B</i><i>0</i><i>7</i><i>1</i><i>3</i></div>
<div class="c" style="left:386px;top:806px;width:99px;height:21px">副主任医生</div>
<div class="c" style="left:489px;top:806px;width:88px;height:21px">下午</div>
<div class="c" style="left:581px;top:806px;width:107px;height:21px"><i>1</i><i>2</i></div>
<div class="g" style="left:577px;top:804px"></div>
<div class="c" style="left:692px;top:806px;width:88px;height:21px"><i>2</i></div>
<div class="g" style="left:688px;top:804px"></div>
<div class="c" style="left:784px;top:806px;width:107px;height:21px"><i>6</i><i>0</i></div>
<div class="g" style="left:780px;top:804px"></div>
<div class="c" style="left:895px;top:806px;width:68px;height:21px"><i>0</i></div>
<div class="g" style="left:891px;top:804px"></div>
<div class="c" style="left:1039px;top:806px;width:68px;height:21px"><i>0</i></div>
<div class="g" style="left:1035px;top:804px"></div>
<div class="c" style="left:1111px;top:806px;width:107px;height:21px"><i>2</i></div>
<div class="g" style="left:1107px;top:804px"></div>
<div class="c" style="left:1222px;top:806px;width:98px;height:21px"><i>2</i></div>
<div class="g" style="left:1218px;top:804px"></div>
<div class="c" style="left:47px;top:830px;width:159px;height:21px">门急诊</div>
<div class="c" style="left:210px;top:830px;width:100px;height:21px">蔡风景<i class="w">B</i><i>0</i><i>7</i><i>1</i><i>3</i></div>
<div class="c" style="left:314px;top:830px;width:68px;height:21px"><i class="w">B</i><i>0</i><i>7</i><i>1</i><i>3</i></div>
<div class="c" style="left:386px;top:830px;width:99px;height:21px">副主任医生</div>
<div class="c" style="left:489px;top:830px;width:88px;height:21px">周日下午</div>
<div class="c" style="left:581px;top:830px;width:107px;height:21px"><i>6</i></div>
<div class="g" style="left:577px;top:828px"></div>
<div class="c" style="left:692px;top:830px;width:88px;height:21px"><i>1</i></div>
<div class="g" style="left:688px;top:828px"></div>
<div class="c" style="left:784px;top:830px;width:107px;height:21px"><i>3</i><i>0</i></div>
<div class="g" style="left:780px;top:828px"></div>
<div class="c" style="left:895px;top:830px;width:68px;height:21px"><i>0</i></div>
<div class="g" style="left:891px;top:828px"></div>
<div class="c" style="left:1039px;top:830px;width:68px;height:21px"><i>0</i></div>
<div class="g" style="left:1035px;top:828px"></div>
<div class="c" style="left:1111px;top:830px;width:107px;height:21px"><i>1</i></div>
<div class="g" style="left:1107px;top:828px"></div>
<div class="c" style="left:1222px;top:830px;width:98px;height:21px"><i>1</i></div>
<div class="g" style="left:1218px;top:828px"></div>
<div class="c" style="left:47px;top:854px;width:159px;height:21px">神经外科门诊</div>
<div class="c" style="left:210px;top:854px;width:100px;height:21px">蔡风景<i class="w">B</i><i>0</i><i>7</i><i>1</i><i>3</i></div>
<div class="c" style="left:314px;top:854px;width:68px;height:21px"><i class="w">B</i><i>0</i><i>7</i><i>1</i><i>3</i></div>
<div class="c" style="left:386px;top:854px;width:99px;height:21px">副主任医生</div>
<div class="c" style="left:489px;top:854px;width:88px;height:21px">下午</div>
<div class="c" style="left:581px;top:854px;width:107px;height:21px"><i>3</i><i>3</i><i>0</i></div>
<div class="g" style="left:577px;top:852px"></div>
<div class="c" style="left:692px;top:854px;width:88px;height:21px"><i>5</i><i>5</i></div>
<div class="g" style="left:688px;top:852px"></div>
<div class="c" style="left:784px;top:854px;width:107px;height:21px"><i>1</i><i>6</i><i>5</i><i>0</i></div>
<div class="g" style="left:780px;top:852px"></div>
<div class="c" style="left:895px;top:854px;width:68px;height:21px"><i>0</i></div>
<div class="g" style="left:891px;top:852px"></div>
<div class="c" style="left:1039px;top:854px;width:68px;height:21px"><i>0</i></div>
<div class="g" style="left:1035px;top:852px"></div>
<div class="c" style="left:1111px;top:854px;width:107px;height:21px"><i>3</i><i>5</i></div>
<div class="g" style="left:1107px;top:852px"></div>
<div class="c" style="left:1222px;top:854px;width:98px;height:21px"><i>3</i><i>5</i></div>
<div class="g" style="left:1218px;top:852px"></div>
<div class="c" style="left:47px;top:878px;width:159px;height:21px">神经外科门诊</div>
<div class="c" style="left:210px;top:878px;width:100px;height:21px">蔡风景<i class="w">B</i><i>0</i><i>7</i><i>1</i><i>3</i></div>
<div class="c" style="left:314px;top:878px;width:68px;height:21px"><i class="w">B</i><i>0</i><i>7</i><i>1</i><i>3</i></div>
<div class="c" style="left:386px;top:878px;width:99px;height:21px">副主任医生</div>
<div class="c" style="left:489px;top:878px;width:88px;height:21px">上午</div>
<div class="c" style="left:581px;top:878px;width:107px;height:21px"><i>7</i><i>8</i></div>
<div class="g" style="left:577px;top:876px"></div>
<div class="c" style="left:692px;top:878px;width:88px;height:21px"><i>1</i><i>3</i></div>
<div class="g" style="left:688px;top:876px"></div>
<div class="c" style="left:784px;top:878px;width:107px;height:21px"><i>3</i><i>9</i><i>0</i></div>
<div class="g" style="left:780px;top:876px"></div>
<div class="c" style="left:895px;top:878px;width:68px;height:21px"><i>0</i></div>
<div class="g" style="left:891px;top:876px"></div>
<div class="c" style="left:1039px;top:878px;width:68px;height:21px"><i>0</i></div>
<div class="g" style="left:1035px;top:876px"></div>
<div class="c" style="left:1111px;top:878px;width:107px;height:21px"><i>5</i></div>
<div class="g" style="left:1107px;top:876px"></div>
<div class="c" style="left:1222px;top:878px;width:98px;height:21px"><i>5</i></div>
<div class="g" style="left:1218px;top:876px"></div>
<div class="c" style="left:47px;top:902px;width:159px;height:21px">神经外科门诊</div>
<div class="c" style="left:210px;top:902px;width:100px;height:21px">蔡风景<i class="w">B</i><i>0</i><i>7</i><i>1</i><i>3</i></div>
<div class="c" style="left:314px;top:902px;width:68px;height:21px"><i class="w">B</i><i>0</i><i>7</i><i>1</i><i>3</i></div>
<div class="c" style="left:386px;top:902px;width:99px;height:21px">副主任医生</div>
<div class="c" style="left:489px;top:902px;width:88px;height:21px">周日下午</div>
<div class="c" style="left:581px;top:902px;width:107px;height:21px"><i>4</i><i>2</i></div>
<div class="g" style="left:577px;top:900px"></div>
<div class="c" style="left:692px;top:902px;width:88px;height:21px"><i>7</i></div>
<div class="g" style="left:688px;top:900px"></div>
<div class="c" style="left:784px;top:902px;width:107px;height:21px"><i>2</i><i>1</i><i>0</i></div>
<div class="g" style="left:780px;top:900px"></div>
<div class="c" style="left:895px;top:902px;width:68px;height:21px"><i>0</i></div>
<div class="g" style="left:891px;top:900px"></div>
<div class="c" style="left:1039px;top:902px;width:68px;height:21px"><i>0</i></div>
<div class="g" style="left:1035px;top:900px"></div>
<div class="c" style="left:1111px;top:902px;width:107px;height:21px"><i>3</i></div>
<div class="g" style="left:1107px;top:900px"></div>
<div class="c" style="left:1222px;top:902px;width:98px;height:21px"><i>3</i></div>
<div class="g" style="left:1218px;top:900px"></div>
<div class="c" style="left:47px;top:926px;width:159px;height:21px">小计</div>
<div class="c" style="left:210px;top:926px;width:100px;height:21px">蔡风景<i class="w">B</i><i>0</i><i>7</i><i>1</i><i>3</i></div>
<div class="c" style="left:314px;top:926px;width:68px;height:21px"><i class="w">B</i><i>0</i><i>7</i><i>1</i><i>3</i></div>
<div class="c" style="left:386px;top:926px;width:99px;height:21px">副主任医生</div>
<div class="c" style="left:581px;top:926px;width:107px;height:21px"><i>3</i><i>4</i><i>2</i></div>
<div class="g" style="left:577px;top:924px"></div>
<div class="c" style="left:692px;top:926px;width:88px;height:21px"><i>5</i><i>7</i></div>
<div class="g" style="left:688px;top:924px"></div>
<div class="c" style="left:784px;top:926px;width:107px;height:21px"><i>1</i><i>7</i><i>1</i><i>0</i></div>
<div class="g" style="left:780px;top:924px"></div>
<div class="c" style="left:895px;top:926px;width:68px;height:21px"><i>0</i></div>
<div class="g" style="left:891px;top:924px"></div>
<div class="c" style="left:1039px;top:926px;width:68px;height:21px"><i>0</i></div>
<div class="g" style="left:1035px;top:924px"></div>
<div class="c" style="left:1111px;top:926px;width:107px;height:21px"><i>3</i><i>7</i></div>
<div class="g" style="left:1107px;top:924px"></div>
<div class="c" style="left:1222px;top:926px;width:98px;height:21px"><i>3</i><i>7</i></div>
<div class="g" style="left:1218px;top:924px"></div>
<div class="c" style="left:47px;top:950px;width:159px;height:18px">小计</div>
<div class="c" style="left:210px;top:950px;width:100px;height:18px">蔡风景<i class="w">B</i><i>0</i><i>7</i><i>1</i><i>3</i></div>
<div class="c" style="left:314px;top:950px;width:68px;height:18px"><i class="w">B</i><i>0</i><i>7</i><i>1</i><i>3</i></div>
<div class="c" style="left:386px;top:950px;width:99px;height:18px">副主任医生</div>
<div class="c" style="left:581px;top:950px;width:107px;height:18px"><i>9</i><i>0</i></div>
<div class="g" style="left:577px;top:948px"></div>
<div class="c" style="left:692px;top:950px;width:88px;height:18px"><i>1</i><i>5</i></div>
<div class="g" style="left:688px;top:948px"></div>
<div class="c" style="left:784px;top:950px;width:107px;height:18px"><i>4</i><i>5</i><i>0</i></div>
<div class="g" style="left:780px;top:948px"></div>
<div class="c" style="left:895px;top:950px;width:68px;height:18px"><i>0</i></div>
<div class="g" style="left:891px;top:948px"></div>
<div class="c" style="left:1039px;top:950px;width:68px;height:18px"><i>0</i></div>
<div class="g" style="left:1035px;top:948px"></div>
<div class="c" style="left:1111px;top:950px;width:107px;height:18px"><i>5</i></div>
<div class="g" style="left:1107px;top:948px"></div>
<div class="c" style="left:1222px;top:950px;width:98px;height:18px"><i>5</i></div>
<div class="g" style="left:1218px;top:948px"></div>
<div class="a" style="left:42px;top:259px;width:1280px;height:3px;background:#338a17"></div>
<div class="a" style="left:42px;top:259px;width:3px;height:61px;background:#338a17"></div>
<div class="a" style="left:42px;top:317px;width:1275px;height:3px;background:#338a17"></div>
<div class="a" style="left:1319px;top:259px;width:3px;height:56px;background:#338a17"></div>
<div class="a" style="left:1318px;top:316px;width:5px;height:5px;background:#338a17"></div>
<div class="a" style="left:1829px;top:261px;width:20px;height:707px;background:#e2e6ef"></div>
<div class="a" style="left:1834px;top:268px;width:10px;height:2px;background:#a9adb3"></div>
<svg style="left:1834px;top:281px" width="10" height="7" viewBox="0 0 10 7"><path d="M5 0l5 7H0z" fill="#7d7f83"/></svg>
<div class="a" style="left:1834px;top:300px;width:10px;height:54px;border-radius:5px;background:#c9ccd1"></div>
<svg style="left:1834px;top:951px" width="10" height="7" viewBox="0 0 10 7"><path d="M0 0h10L5 7z" fill="#7d7f83"/></svg>
<div class="a" style="left:15px;top:192px;width:203px;height:35px;border-radius:7px;background:#fff;border:1px solid #d9dce2;box-shadow:0 1px 1px rgba(90,100,120,.12)"></div>
<div class="a" style="left:228px;top:192px;width:1606px;height:35px;border-radius:7px;background:#fff;border:1px solid #d9dce2;box-shadow:0 1px 1px rgba(90,100,120,.12)"></div>
<div class="rt" style="left:95px;top:200px;font-size:16px;font-family:'Liberation Sans',sans-serif;color:#2b2b2b">A1</div>
<svg style="left:198px;top:207.5px" width="10" height="6" viewBox="0 0 10 6"><path d="M0.7 0.7L5 5 9.300 0.7" fill="none" stroke="#555" stroke-width="1.200" stroke-linecap="round" stroke-linejoin="round"/></svg>
<svg style="left:258px;top:200px" width="19" height="19" viewBox="0 0 19 19"><circle cx="8.200" cy="8" r="6.700" fill="none" stroke="#3a3a3a" stroke-width="1.5" stroke-linecap="round" stroke-linejoin="round"/><path d="M13 12.800l5 4.900M5.500 6.200h5.500M5.500 9.500h5.500" fill="none" stroke="#3a3a3a" stroke-width="1.5" stroke-linecap="round" stroke-linejoin="round"/></svg>
<div class="rt" style="left:296px;top:196px;font:italic 20px/24px 'Liberation Sans','DejaVu Sans',sans-serif;color:#333">ƒ<span style="font-size:17px;position:relative;top:0;left:-1px">x</span></div>
<div class="a" style="left:330px;top:200px;width:1px;height:20px;background:#d9dce2"></div>
<div class="rt" style="left:340px;top:198px;font-size:17px;line-height:22px;letter-spacing:1.030px;color:#303030;font-weight:300;font-family:'Liberation Serif','Noto Serif CJK SC',serif">福建医科大学附属第二医院东海院区东海收费处工作量统计表<i style="font-style:normal;display:inline-block;width:9px;text-align:right">(</i>所有病人<i style="font-style:normal;display:inline-block;width:9px;text-align:left">)</i></div>
<div class="a" style="left:1849px;top:185px;width:1px;height:815px;background:#c5cad4"></div>
<div class="a" style="left:1876px;top:214px;width:17px;height:2px;background:#8a8d93"></div>
<svg style="left:1875px;top:245px" width="21" height="21" viewBox="0 0 21 21"><path d="M1 1l18 6.500-7 3.500 6.500 6.500-2.500 2.500-6.500-6.500-3.500 7z" fill="none" stroke="#3a3d42" stroke-width="1.4" stroke-linecap="round" stroke-linejoin="round"/></svg>
<svg style="left:1875px;top:296px" width="21" height="18" viewBox="0 0 21 18"><path d="M0 4.500h3M8 4.500h12M0 13.500h12M17 13.500h3" fill="none" stroke="#9a9ea6" stroke-width="1.3" stroke-linecap="round" stroke-linejoin="round"/><rect x="3.500" y="1" width="4" height="7" rx="2" fill="none" stroke="#9a9ea6" stroke-width="1.3" stroke-linecap="round" stroke-linejoin="round"/><rect x="12.500" y="10" width="4" height="7" rx="2" fill="none" stroke="#9a9ea6" stroke-width="1.3" stroke-linecap="round" stroke-linejoin="round"/></svg>
<svg style="left:1875px;top:344px" width="21" height="21" viewBox="0 0 21 21"><path d="M2 1h18M1 5v15M19 8v8H5" fill="none" stroke="#9a9ea6" stroke-width="1.3" stroke-linecap="round" stroke-linejoin="round"/><path d="M16 11l3-3.500 3 3.500M8 13l-3.500 3 3.500 3" fill="none" stroke="#9a9ea6" stroke-width="1.3" stroke-linecap="round" stroke-linejoin="round"/></svg>
<svg style="left:1875px;top:395px" width="21" height="20" viewBox="0 0 21 20"><path d="M20 7V5a4 4 0 0 0-4-4H5a4 4 0 0 0-4 4v2.500h3.500v9.500a2 2 0 0 0 2 2H9" fill="none" stroke="#3a3d42" stroke-width="1.4" stroke-linecap="round" stroke-linejoin="round"/><path d="M12 18.500c-2.500-3-2-6.500 0-9 1.500 3 2 5.500 0 9zM13.500 18.500c.5-3 2-4.500 5.500-5.500 0 3-2 5-5.500 5.500z" fill="none" stroke="#3a3d42" stroke-width="1.4" stroke-linecap="round" stroke-linejoin="round"/></svg>
<svg style="left:1875px;top:444px" width="21" height="21" viewBox="0 0 21 21"><path d="M5 6.500L8 4l12 13.500-3 2.500zM8.500 10.500l3-2.500" fill="none" stroke="#3a3d42" stroke-width="1.4" stroke-linecap="round" stroke-linejoin="round"/><path d="M16 1l.9 2.100L19 4l-2.100.9L16 7l-.9-2.100L13 4l2.100-.9zM4 13l.9 2.100L7 16l-2.100.9L4 19l-.9-2.100L1 16l2.100-.9z" fill="none" stroke="#3a3d42" stroke-width="1.1" stroke-linecap="round" stroke-linejoin="round"/></svg>
<svg style="left:1875px;top:494px" width="21" height="21" viewBox="0 0 21 21"><path d="M1 3l9.500 2L19 2.500V11M1 3v15l7 1.500" fill="none" stroke="#3a3d42" stroke-width="1.4" stroke-linecap="round" stroke-linejoin="round"/><circle cx="14.500" cy="14.500" r="4" fill="none" stroke="#3a3d42" stroke-width="1.4" stroke-linecap="round" stroke-linejoin="round"/><path d="M17.500 17.500l3 3" fill="none" stroke="#3a3d42" stroke-width="1.4" stroke-linecap="round" stroke-linejoin="round"/></svg>
<svg style="left:1875px;top:545px" width="21" height="21" viewBox="0 0 21 21"><circle cx="10.500" cy="10.500" r="9.500" fill="none" stroke="#3a3d42" stroke-width="1.4" stroke-linecap="round" stroke-linejoin="round"/><path d="M7.500 8a3 3 0 1 1 4.500 2.600c-1 .6-1.500 1.200-1.500 2.400" fill="none" stroke="#3a3d42" stroke-width="1.4" stroke-linecap="round" stroke-linejoin="round"/><circle cx="10.500" cy="16" r="1" fill="#3a3d42"/></svg>
<svg style="left:1875px;top:601px" width="21" height="8" viewBox="0 0 21 8"><circle cx="3" cy="4" r="2" fill="none" stroke="#3a3d42" stroke-width="1.4" stroke-linecap="round" stroke-linejoin="round"/><circle cx="10.500" cy="4" r="2" fill="none" stroke="#3a3d42" stroke-width="1.4" stroke-linecap="round" stroke-linejoin="round"/><circle cx="18" cy="4" r="2" fill="none" stroke="#3a3d42" stroke-width="1.4" stroke-linecap="round" stroke-linejoin="round"/></svg>
<div class="a" style="left:0;top:968px;width:1849px;height:1px;background:#d5d8de"></div>
<svg style="left:18px;top:977px" width="12" height="13" viewBox="0 0 12 13"><path d="M1 0.500v12M10.500 1L5 6.500l5.500 5.500" fill="none" stroke="#9a9da3" stroke-width="2.1" stroke-linecap="round" stroke-linejoin="round"/></svg>
<svg style="left:47px;top:977px" width="8" height="13" viewBox="0 0 8 13"><path d="M7 1L1.500 6.500 7 12" fill="none" stroke="#9a9da3" stroke-width="2.1" stroke-linecap="round" stroke-linejoin="round"/></svg>
<svg style="left:75px;top:977px" width="8" height="13" viewBox="0 0 8 13"><path d="M1 1l5.500 5.500L1 12" fill="none" stroke="#9a9da3" stroke-width="2.1" stroke-linecap="round" stroke-linejoin="round"/></svg>
<svg style="left:99px;top:977px" width="12" height="13" viewBox="0 0 12 13"><path d="M1.500 1L7 6.500 1.500 12M11 0.500v12" fill="none" stroke="#9a9da3" stroke-width="2.1" stroke-linecap="round" stroke-linejoin="round"/></svg>
<div class="a" style="left:127px;top:968px;width:79px;height:30px;background:#fff;border-radius:0 0 8px 8px"></div>
<div class="a" style="left:127px;top:968px;width:79px;height:30px;line-height:31px;text-align:center;font:bold 16px/33px 'Liberation Sans',sans-serif;color:#0b7a64">Sheet0</div>
<svg style="left:215px;top:979px" width="12" height="12" viewBox="0 0 12 12"><path d="M6 0v12M0 6h12" stroke="#222" stroke-width="2" fill="none"/></svg>
<div class="a" style="left:1088px;top:978px;width:1px;height:10px;background:#9a9ea6"></div>
<svg style="left:1106px;top:980px" width="6" height="8" viewBox="0 0 6 8"><path d="M6 0v8L0 4z" fill="#6f7277"/></svg>
<div class="a" style="left:1125px;top:979px;width:618px;height:10px;border-radius:5px;background:#c9ccd1"></div>
<svg style="left:1801px;top:980px" width="6" height="8" viewBox="0 0 6 8"><path d="M0 0v8l6-4z" fill="#6f7277"/></svg>
<div class="a" style="left:1822px;top:979px;width:2px;height:10px;background:#9a9ea6"></div>
<div class="a" style="left:0;top:1000px;width:1920px;height:1px;background:#cfd3da"></div>
<svg style="left:21px;top:1008px" width="18" height="15" viewBox="0 0 18 15"><path d="M1 1h6v3H2v3h5M10 1v4M1 10v3.500h9a3 3 0 0 0 3-3V4h4v3h-4" fill="none" stroke="#3a3d42" stroke-width="1.3" stroke-linecap="round" stroke-linejoin="round"/></svg>
<div class="a" style="left:55px;top:1006px;width:1px;height:18px;background:#c9cdd4"></div>
<div class="a ui" style="left:66px;top:1004px;line-height:22px;font-size:15px;color:#1f2329;white-space:nowrap">平均值<span style="letter-spacing:1.700px;margin-left:1px">=0</span></div>
<div class="a ui" style="left:139.5px;top:1004px;line-height:22px;font-size:15px;color:#1f2329;white-space:nowrap">计数<span style="letter-spacing:1.700px;margin-left:1px">=1</span></div>
<div class="a ui" style="left:197.5px;top:1004px;line-height:22px;font-size:15px;color:#1f2329;white-space:nowrap">求和<span style="letter-spacing:1.700px;margin-left:1px">=0</span></div>
<svg style="left:1333px;top:1007px" width="19" height="14" viewBox="0 0 19 14"><path d="M1 7c2.500-4 5.500-6 8.500-6s6 2 8.500 6c-2.500 4-5.500 6-8.500 6s-6-2-8.500-6z" fill="none" stroke="#3a3d42" stroke-width="1.3" stroke-linecap="round" stroke-linejoin="round"/><circle cx="9.500" cy="7" r="2.700" fill="none" stroke="#3a3d42" stroke-width="1.3" stroke-linecap="round" stroke-linejoin="round"/></svg>
<svg style="left:1376px;top:1006px" width="17" height="17" viewBox="0 0 17 17"><rect x="5" y="5" width="7" height="7" rx="1" fill="none" stroke="#3a3d42" stroke-width="1.3" stroke-linecap="round" stroke-linejoin="round"/><path d="M8.500 0.500v4M8.500 12.500v4M0.500 8.500h4M12.500 8.500h4M6 2.500h5M6 14.500h5M2.500 6v5M14.500 6v5" fill="none" stroke="#3a3d42" stroke-width="1.3" stroke-linecap="round" stroke-linejoin="round"/></svg>
<svg style="left:1399px;top:1012px" width="7" height="5" viewBox="0 0 7 5"><path d="M0.800 0.800L3.500 3.500 6.200 0.800" fill="none" stroke="#2b2b2b" stroke-width="1.500"/></svg>
<div class="a" style="left:1425px;top:1006px;width:1px;height:18px;background:#c9cdd4"></div>
<div class="a" style="left:1436px;top:1001px;width:30px;height:29px;border-radius:4px;background:#d3d7de"></div>
<svg style="left:1443px;top:1007px" width="17" height="15" viewBox="0 0 17 15"><rect x="0.700" y="0.700" width="15.600" height="13.600" rx="1.500" fill="none" stroke="#3a3d42" stroke-width="1.3" stroke-linecap="round" stroke-linejoin="round"/><path d="M0.700 5h15.600M5.500 5v9.300" fill="none" stroke="#3a3d42" stroke-width="1.3" stroke-linecap="round" stroke-linejoin="round"/></svg>
<svg style="left:1483px;top:1007px" width="17" height="15" viewBox="0 0 17 15"><rect x="0.700" y="0.700" width="15.600" height="13.600" rx="1.500" fill="none" stroke="#3a3d42" stroke-width="1.3" stroke-linecap="round" stroke-linejoin="round"/><path d="M8.500 0.700v13.600" fill="none" stroke="#3a3d42" stroke-width="1.3" stroke-linecap="round" stroke-linejoin="round"/></svg>
<svg style="left:1523px;top:1007px" width="17" height="15" viewBox="0 0 17 15"><rect x="0.700" y="3.500" width="13" height="10.800" rx="1.500" fill="none" stroke="#3a3d42" stroke-width="1.3" stroke-linecap="round" stroke-linejoin="round"/><path d="M3.500 0.700h12.800v10.500h-2.500" fill="none" stroke="#3a3d42" stroke-width="1.3" stroke-linecap="round" stroke-linejoin="round"/></svg>
<div class="a" style="left:1557px;top:1006px;width:1px;height:18px;background:#c9cdd4"></div>
<div class="a" style="left:1577px;top:1004px;line-height:22px;font:15.800px/22px 'Liberation Sans',sans-serif;color:#2b2b2b">100%</div>
<svg style="left:1630px;top:1013px" width="7" height="5" viewBox="0 0 7 5"><path d="M0.800 0.800L3.500 3.500 6.200 0.800" fill="none" stroke="#2b2b2b" stroke-width="1.500"/></svg>
<div class="a" style="left:1660px;top:1014px;width:16px;height:2px;background:#222"></div>
<div class="a" style="left:1693px;top:1014px;width:65px;height:2px;background:#1a4fc9"></div>
<div class="a" style="left:1754px;top:1009px;width:11px;height:11px;border-radius:6px;background:#fff;border:1px solid #d0d4da"></div><div class="a" style="left:1757px;top:1012px;width:5px;height:5px;border-radius:3px;background:#9a9a9a"></div>
<div class="a" style="left:1782px;top:998px;width:137px;height:32px;background:#fff;border-radius:3px 3px 0 0;border:1px solid #b9cfeb;border-bottom:0"></div>
<div class="a" style="left:1761px;top:996px;width:34px;height:34px;border-radius:5px;background:#f2591f;transform:rotate(-14deg)"></div>
<div class="a" style="left:1765px;top:991px;width:30px;font:bold italic 36px/44px 'Liberation Sans',sans-serif;color:#fff;transform:rotate(-10deg) scale(1.300,.82)">S</div>
<div class="a ui" style="left:1805px;top:1002px;font-weight:700;font-size:19px;line-height:24px;color:#1565d8">英</div>
<div class="a ui" style="left:1866px;top:1002px;font-weight:700;font-size:19px;line-height:24px;color:#1565d8">全</div>
<div class="a ui" style="left:1896px;top:1002px;font-weight:700;font-size:19px;line-height:24px;color:#1565d8">简</div>
<div class="a" style="left:1838px;top:1008px;width:5px;height:5px;border-radius:3px;background:#1565d8"></div><div class="a" style="left:1846px;top:1000px;font:bold 22px/24px 'Liberation Serif',serif;color:#1565d8">,</div>
<div class="a" style="left:0;top:949px;width:14px;height:75px;border-radius:4px;background:#4a5058"></div>
<div class="a" style="left:3px;top:958px;width:6px;height:57px;background:linear-gradient(#2e3237 0,#2e3237 12px,#c89a4a 12px,#b9b548 45%,#62b877 75%,#3fb59c)"></div><div class="a" style="left:3px;top:958px;width:6px;height:57px;background:repeating-linear-gradient(transparent 0 2px,#4a5058 2px 3px)"></div>
</body></html>
